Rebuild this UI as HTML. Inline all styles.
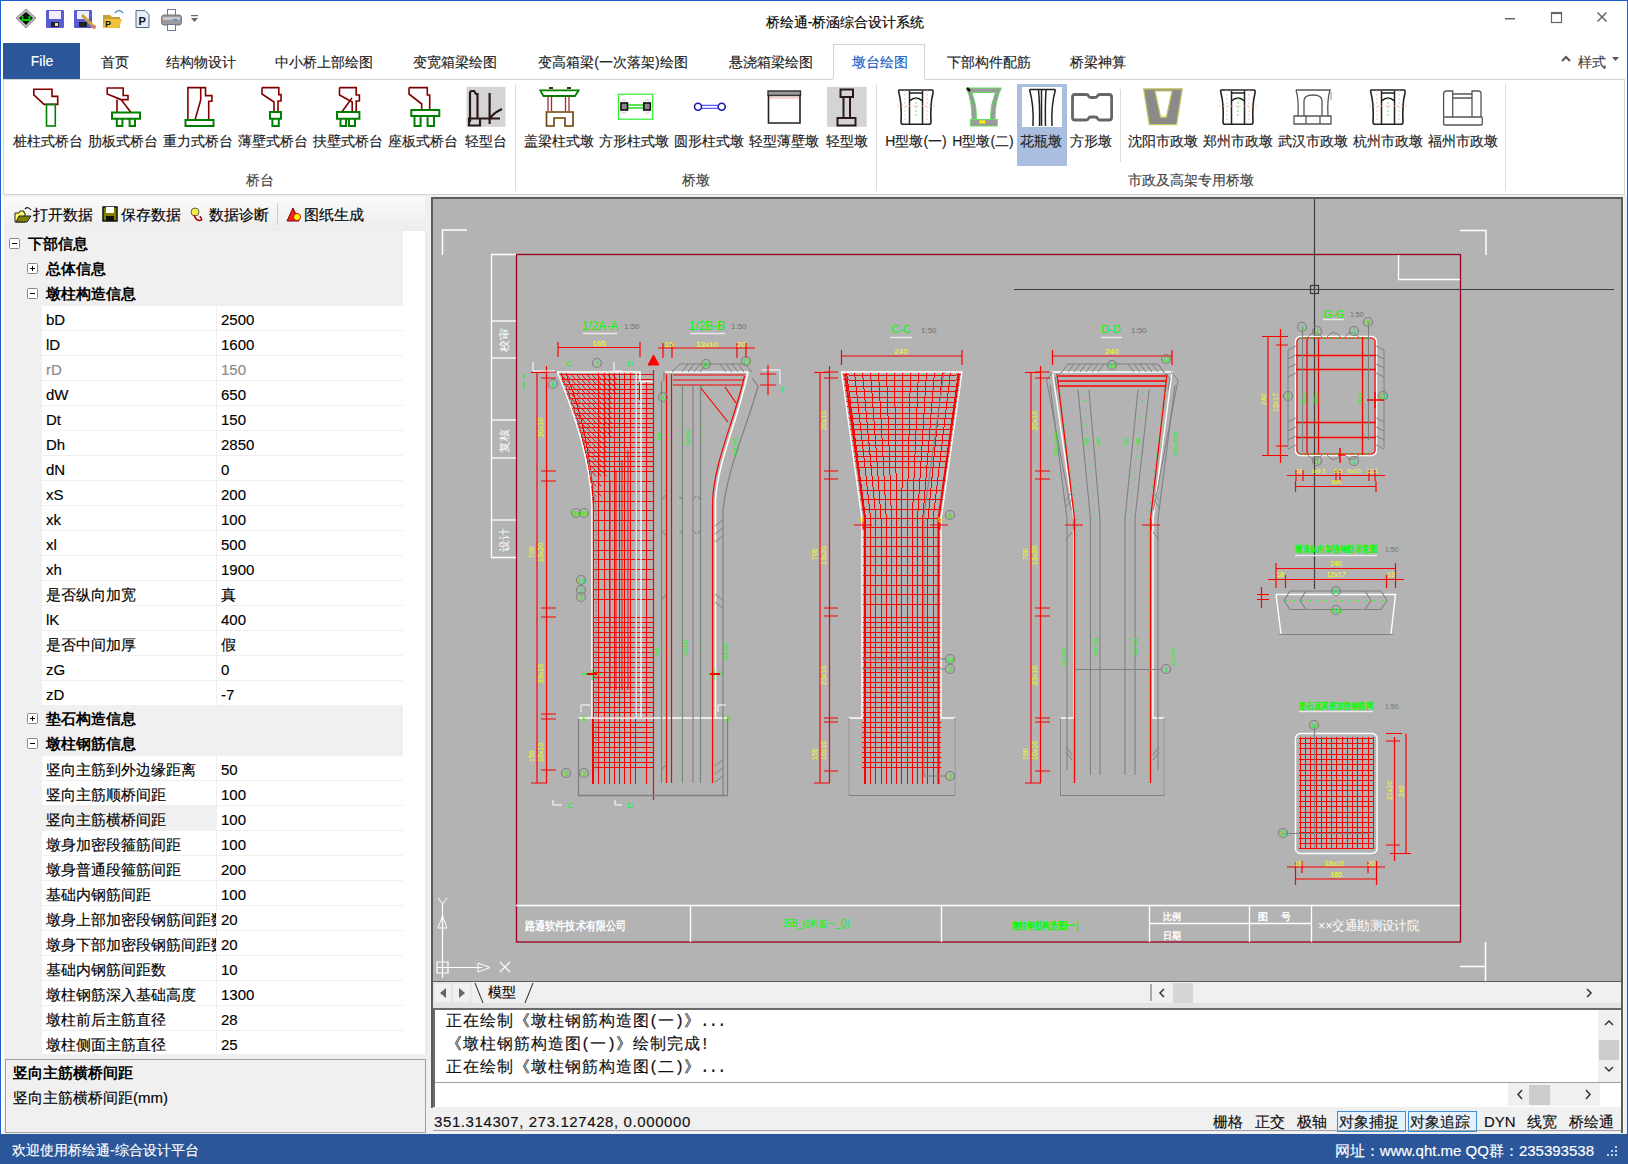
<!DOCTYPE html>
<html><head><meta charset="utf-8"><title>桥绘通</title>
<style>
html,body{margin:0;padding:0;}
body{width:1628px;height:1164px;position:relative;overflow:hidden;background:#fff;font-family:"Liberation Sans", sans-serif;}
.a{position:absolute;}
.t{white-space:nowrap;-webkit-text-stroke:0.15px;}
.t i{display:inline-block;width:1em;text-align:center;font-style:normal;}
.nocjk .t i{-webkit-text-stroke:1.2px;}
.nocjk .b i{-webkit-text-stroke:2px;}
</style></head><body>
<div class="a" style="left:0px;top:0px;width:1628px;height:1164px;background:#fff;"></div>
<div class="a t" style="left:695.0px;width:300px;text-align:center;top:12.5px;font-size:14px;line-height:19px;color:#000;font-weight:normal;"><i>桥</i><i>绘</i><i>通</i>-<i>桥</i><i>涵</i><i>综</i><i>合</i><i>设</i><i>计</i><i>系</i><i>统</i></div>
<svg class="a" style="left:1495px;top:8px" width="130" height="20"><rect x="10" y="10" width="10" height="1.5" fill="#666"/><rect x="56.5" y="4.5" width="10" height="10" fill="none" stroke="#666" stroke-width="1.2"/><rect x="56.5" y="4.5" width="10" height="1.6" fill="#666"/><path d="M102.5 4.5 L111.5 13.5 M111.5 4.5 L102.5 13.5" stroke="#666" stroke-width="1.5"/></svg>
<svg class="a" style="left:10px;top:5px" width="200" height="30"><path d="M16 4 L26 13 L16 23 L6 13 Z" fill="#bbb" stroke="#888" stroke-width="1"/><path d="M16 7 L23 13 L16 20 L9 13 Z" fill="#111"/><path d="M12.5 11 v4 h7 v-4" fill="none" stroke="#0c0" stroke-width="2"/><rect x="36" y="5" width="18" height="18" rx="1" fill="#5b5bd6"/><rect x="39" y="6" width="12" height="8" fill="#eef"/><rect x="41" y="17" width="8" height="5" fill="#222"/><rect x="45" y="18" width="3" height="3" fill="#ddd"/><rect x="64" y="5" width="18" height="18" rx="1" fill="#5b5bd6"/><rect x="67" y="6" width="12" height="8" fill="#eef"/><rect x="69" y="17" width="8" height="5" fill="#222"/><path d="M72 10 L84 22" stroke="#c9a83a" stroke-width="3"/><circle cx="84" cy="22" r="2" fill="#d77"/><path d="M93 10 h7 l2 2 h8 v11 h-17 z" fill="#c8a030"/><path d="M95 14 h17 l-3 9 h-16 z" fill="#f3c23a"/><text x="95" y="22" font-size="9" font-weight="bold" fill="#111" font-family="Liberation Sans">P</text><path d="M105 8 q4 -5 8 0" fill="none" stroke="#5a8fd0" stroke-width="1.5"/><path d="M126 5.5 h9 l4 4 v13 h-13 z" fill="#e6ecf6" stroke="#5a6a88" stroke-width="1"/><text x="128.5" y="20" font-size="11" font-weight="bold" fill="#111" font-family="Liberation Sans">P</text><rect x="157.5" y="4.5" width="8" height="6" fill="#fff" stroke="#6a7a98" stroke-width="1"/><rect x="151.5" y="10" width="20" height="10" rx="2.5" fill="#9a9a9a" stroke="#777" stroke-width="1"/><rect x="153" y="12" width="17" height="3" fill="#c8c8c8"/><rect x="163" y="14" width="4" height="1.5" fill="#4a90e0"/><rect x="157.5" y="19.5" width="8" height="6" fill="#fff" stroke="#6a7a98" stroke-width="1"/><rect x="181" y="10" width="7" height="1.2" fill="#666"/><path d="M181 13 h7 l-3.5 4 z" fill="#666"/></svg>
<div class="a" style="left:3px;top:43px;width:77px;height:36px;background:#2b579a;"></div>
<div class="a t" style="left:3.5px;width:77px;text-align:center;top:51.5px;font-size:14px;line-height:19px;color:#fff;font-weight:normal;">File</div>
<div class="a t" style="left:-5.0px;width:240px;text-align:center;top:52.5px;font-size:14px;line-height:19px;color:#222;font-weight:normal;"><i>首</i><i>页</i></div>
<div class="a t" style="left:81.0px;width:240px;text-align:center;top:52.5px;font-size:14px;line-height:19px;color:#222;font-weight:normal;"><i>结</i><i>构</i><i>物</i><i>设</i><i>计</i></div>
<div class="a t" style="left:204.0px;width:240px;text-align:center;top:52.5px;font-size:14px;line-height:19px;color:#222;font-weight:normal;"><i>中</i><i>小</i><i>桥</i><i>上</i><i>部</i><i>绘</i><i>图</i></div>
<div class="a t" style="left:335.0px;width:240px;text-align:center;top:52.5px;font-size:14px;line-height:19px;color:#222;font-weight:normal;"><i>变</i><i>宽</i><i>箱</i><i>梁</i><i>绘</i><i>图</i></div>
<div class="a t" style="left:493.0px;width:240px;text-align:center;top:52.5px;font-size:14px;line-height:19px;color:#222;font-weight:normal;"><i>变</i><i>高</i><i>箱</i><i>梁</i>(<i>一</i><i>次</i><i>落</i><i>架</i>)<i>绘</i><i>图</i></div>
<div class="a t" style="left:651.0px;width:240px;text-align:center;top:52.5px;font-size:14px;line-height:19px;color:#222;font-weight:normal;"><i>悬</i><i>浇</i><i>箱</i><i>梁</i><i>绘</i><i>图</i></div>
<div class="a t" style="left:869.0px;width:240px;text-align:center;top:52.5px;font-size:14px;line-height:19px;color:#222;font-weight:normal;"><i>下</i><i>部</i><i>构</i><i>件</i><i>配</i><i>筋</i></div>
<div class="a t" style="left:978.0px;width:240px;text-align:center;top:52.5px;font-size:14px;line-height:19px;color:#222;font-weight:normal;"><i>桥</i><i>梁</i><i>神</i><i>算</i></div>
<div class="a" style="left:833px;top:44px;width:92px;height:36px;background:#fff;border:1px solid #d2d2d2;border-bottom:none;box-sizing:border-box;"></div>
<div class="a t" style="left:834.0px;width:92px;text-align:center;top:52.5px;font-size:14px;line-height:19px;color:#1a5fc8;font-weight:normal;"><i>墩</i><i>台</i><i>绘</i><i>图</i></div>
<div class="a t " style="left:1578px;top:52.5px;font-size:14px;line-height:19px;color:#444;font-weight:normal;"><i>样</i><i>式</i></div>
<svg class="a" style="left:1558px;top:52px" width="70" height="20"><path d="M4 9 L8 5 L12 9" fill="none" stroke="#555" stroke-width="2"/><path d="M54 5 h7 l-3.5 4 z" fill="#555"/></svg>
<div class="a" style="left:3px;top:79px;width:1622px;height:116px;background:#fff;border:1px solid #d4d4d4;box-sizing:border-box;"></div>
<div class="a" style="left:833px;top:79px;width:92px;height:2px;background:#fff;"></div>
<div class="a" style="left:515px;top:84px;width:1px;height:107px;background:#dcdcdc;"></div>
<div class="a" style="left:876px;top:84px;width:1px;height:107px;background:#dcdcdc;"></div>
<div class="a" style="left:1505px;top:84px;width:1px;height:107px;background:#dcdcdc;"></div>
<div class="a" style="left:1120px;top:89px;width:1px;height:73px;background:#dcdcdc;"></div>
<div class="a" style="left:1017px;top:84px;width:50px;height:82px;background:#aabfdf;"></div>
<div class="a" style="left:1022px;top:87px;width:40px;height:40px;background:#fff;"></div>
<div class="a t" style="left:3.0px;width:90px;text-align:center;top:131.5px;font-size:14px;line-height:19px;color:#222;font-weight:normal;"><i>桩</i><i>柱</i><i>式</i><i>桥</i><i>台</i></div>
<div class="a t" style="left:78.0px;width:90px;text-align:center;top:131.5px;font-size:14px;line-height:19px;color:#222;font-weight:normal;"><i>肋</i><i>板</i><i>式</i><i>桥</i><i>台</i></div>
<div class="a t" style="left:153.0px;width:90px;text-align:center;top:131.5px;font-size:14px;line-height:19px;color:#222;font-weight:normal;"><i>重</i><i>力</i><i>式</i><i>桥</i><i>台</i></div>
<div class="a t" style="left:228.0px;width:90px;text-align:center;top:131.5px;font-size:14px;line-height:19px;color:#222;font-weight:normal;"><i>薄</i><i>壁</i><i>式</i><i>桥</i><i>台</i></div>
<div class="a t" style="left:303.0px;width:90px;text-align:center;top:131.5px;font-size:14px;line-height:19px;color:#222;font-weight:normal;"><i>扶</i><i>壁</i><i>式</i><i>桥</i><i>台</i></div>
<div class="a t" style="left:378.0px;width:90px;text-align:center;top:131.5px;font-size:14px;line-height:19px;color:#222;font-weight:normal;"><i>座</i><i>板</i><i>式</i><i>桥</i><i>台</i></div>
<div class="a t" style="left:441.0px;width:90px;text-align:center;top:131.5px;font-size:14px;line-height:19px;color:#222;font-weight:normal;"><i>轻</i><i>型</i><i>台</i></div>
<div class="a t" style="left:514.0px;width:90px;text-align:center;top:131.5px;font-size:14px;line-height:19px;color:#222;font-weight:normal;"><i>盖</i><i>梁</i><i>柱</i><i>式</i><i>墩</i></div>
<div class="a t" style="left:589.0px;width:90px;text-align:center;top:131.5px;font-size:14px;line-height:19px;color:#222;font-weight:normal;"><i>方</i><i>形</i><i>柱</i><i>式</i><i>墩</i></div>
<div class="a t" style="left:664.0px;width:90px;text-align:center;top:131.5px;font-size:14px;line-height:19px;color:#222;font-weight:normal;"><i>圆</i><i>形</i><i>柱</i><i>式</i><i>墩</i></div>
<div class="a t" style="left:739.0px;width:90px;text-align:center;top:131.5px;font-size:14px;line-height:19px;color:#222;font-weight:normal;"><i>轻</i><i>型</i><i>薄</i><i>壁</i><i>墩</i></div>
<div class="a t" style="left:802.0px;width:90px;text-align:center;top:131.5px;font-size:14px;line-height:19px;color:#222;font-weight:normal;"><i>轻</i><i>型</i><i>墩</i></div>
<div class="a t" style="left:871.0px;width:90px;text-align:center;top:131.5px;font-size:14px;line-height:19px;color:#222;font-weight:normal;">H<i>型</i><i>墩</i>(<i>一</i>)</div>
<div class="a t" style="left:938.0px;width:90px;text-align:center;top:131.5px;font-size:14px;line-height:19px;color:#222;font-weight:normal;">H<i>型</i><i>墩</i>(<i>二</i>)</div>
<div class="a t" style="left:996.0px;width:90px;text-align:center;top:131.5px;font-size:14px;line-height:19px;color:#222;font-weight:normal;"><i>花</i><i>瓶</i><i>墩</i></div>
<div class="a t" style="left:1046.0px;width:90px;text-align:center;top:131.5px;font-size:14px;line-height:19px;color:#222;font-weight:normal;"><i>方</i><i>形</i><i>墩</i></div>
<div class="a t" style="left:1118.0px;width:90px;text-align:center;top:131.5px;font-size:14px;line-height:19px;color:#222;font-weight:normal;"><i>沈</i><i>阳</i><i>市</i><i>政</i><i>墩</i></div>
<div class="a t" style="left:1193.0px;width:90px;text-align:center;top:131.5px;font-size:14px;line-height:19px;color:#222;font-weight:normal;"><i>郑</i><i>州</i><i>市</i><i>政</i><i>墩</i></div>
<div class="a t" style="left:1268.0px;width:90px;text-align:center;top:131.5px;font-size:14px;line-height:19px;color:#222;font-weight:normal;"><i>武</i><i>汉</i><i>市</i><i>政</i><i>墩</i></div>
<div class="a t" style="left:1343.0px;width:90px;text-align:center;top:131.5px;font-size:14px;line-height:19px;color:#222;font-weight:normal;"><i>杭</i><i>州</i><i>市</i><i>政</i><i>墩</i></div>
<div class="a t" style="left:1418.0px;width:90px;text-align:center;top:131.5px;font-size:14px;line-height:19px;color:#222;font-weight:normal;"><i>福</i><i>州</i><i>市</i><i>政</i><i>墩</i></div>
<div class="a t" style="left:220.0px;width:80px;text-align:center;top:170.5px;font-size:14px;line-height:19px;color:#444;font-weight:normal;"><i>桥</i><i>台</i></div>
<div class="a t" style="left:656.0px;width:80px;text-align:center;top:170.5px;font-size:14px;line-height:19px;color:#444;font-weight:normal;"><i>桥</i><i>墩</i></div>
<div class="a t" style="left:1091.0px;width:200px;text-align:center;top:170.5px;font-size:14px;line-height:19px;color:#444;font-weight:normal;"><i>市</i><i>政</i><i>及</i><i>高</i><i>架</i><i>专</i><i>用</i><i>桥</i><i>墩</i></div>
<svg class="a" style="left:0px;top:80px" width="1628" height="50" viewBox="0 80 1628 50">
<path d="M33.8 89.2 H52 V96.4 H57.7 V104.4 H44.1 L33.8 94.8 Z" stroke="#800000" stroke-width="1.6" fill="none" stroke-linejoin="miter"/>
<rect x="46.5" y="104.4" width="8.8" height="21.6" stroke="#008000" stroke-width="1.6" fill="none" stroke-linejoin="miter"/>
<path d="M107.2 88 H123.2 V95.5 H128 V99.6 H121 L107.2 94 Z M117 99.6 V112.4 M121 99.6 L131 112.4" stroke="#800000" stroke-width="1.6" fill="none" stroke-linejoin="miter"/>
<path d="M112 112.4 H140 V118.7 H112 Z M116.8 118.7 V126 H122.4 V118.7 M129.6 118.7 V126 H135 V118.7" stroke="#008000" stroke-width="2" fill="none"/>
<path d="M187.9 120 V87.6 H205.5 V95.6 H211.9 V101.2 H208.7 V120 M200.7 87.6 V100 L195 120" stroke="#800000" stroke-width="1.6" fill="none" stroke-linejoin="miter"/>
<rect x="185.5" y="120" width="28" height="6" stroke="#008000" stroke-width="2" fill="none"/>
<path d="M262 87.6 H278.8 V94.6 H281 V101 H278 V112 M262 87.6 V94 L274 102 V112" stroke="#800000" stroke-width="1.6" fill="none" stroke-linejoin="miter"/>
<path d="M270 112 H281 V118.7 H270 Z M272.4 118.7 V126 H278.8 V118.7" stroke="#008000" stroke-width="2" fill="none"/>
<path d="M339.5 87.6 H356.2 V95 H359.4 V101 H356.2 V112 M339.5 87.6 V95 L352.2 102 V112 M341.8 112 L352 98" stroke="#800000" stroke-width="1.6" fill="none" stroke-linejoin="miter"/>
<path d="M337 112 H359.4 V118.7 H337 Z M340.5 118.7 V126 H346 V118.7 M349 118.7 V126 H355 V118.7" stroke="#008000" stroke-width="2" fill="none"/>
<path d="M409 87.6 H427.3 V95 H429.7 V110 M409 87.6 V94 L421.7 104 V110" stroke="#800000" stroke-width="1.6" fill="none" stroke-linejoin="miter"/>
<path d="M411.3 110 H439.3 V116 H411.3 Z M414.5 116 V126 H420.6 V116 M427.6 116 V126 H434 V116" stroke="#008000" stroke-width="2" fill="none"/>
<rect x="466.5" y="86.8" width="39" height="40" fill="#d4d4d4"/>
<path d="M470 122 V93 Q470 91 472 91 H474 L476 94 H477.5 V118 M469 118.5 H480 V125.5 H469 Z M489.6 93 V124 M477 118.5 H500 M490 118 Q495 112 502 109" stroke="#2a1818" stroke-width="2.2" fill="none"/>
<path d="M540.3 90.4 H578.6 L575 96 H543.5 Z" stroke="#008000" stroke-width="1.8" fill="#fff"/>
<path d="M549 88 h4 M567 88 h4" stroke="#4a3000" stroke-width="2"/>
<path d="M548 96 V111 M551.5 96 V111 M565.5 96 V111 M569 96 V111" stroke="#a0302a" stroke-width="1.3"/>
<path d="M546.5 112 H573 V126 H565 V118 H554 V126 H546.5 Z" stroke="#6b4000" stroke-width="1.6" fill="none"/>
<rect x="618.4" y="94.2" width="34.3" height="25" stroke="#33ee33" stroke-width="1.2" fill="none"/>
<ellipse cx="624" cy="106.5" rx="3" ry="7" stroke="#ccc" stroke-width="1" fill="none"/><ellipse cx="647" cy="106.5" rx="3" ry="7" stroke="#ccc" stroke-width="1" fill="none"/>
<path d="M627 105 H644 M627 108 H644" stroke="#22dd22" stroke-width="1.5"/>
<rect x="621" y="103" width="6.5" height="7" stroke="#111" stroke-width="1.6" fill="#888"/><rect x="643.8" y="103" width="6.5" height="7" stroke="#111" stroke-width="1.6" fill="#888"/>
<path d="M701 105.3 H718.5 M701 108.3 H718.5" stroke="#3333ff" stroke-width="1"/>
<circle cx="698" cy="106.8" r="3.5" stroke="#1a1aa8" stroke-width="1.6" fill="#fff"/><circle cx="721.7" cy="106.8" r="3.5" stroke="#1a1aa8" stroke-width="1.6" fill="#fff"/>
<path d="M768 91 H800.5 V95.5 H768 Z" stroke="#333" stroke-width="1.4" fill="#999"/>
<path d="M768.5 95 V123 H800 V95" stroke="#222" stroke-width="1.6" fill="none"/>
<path d="M769 98 H799" stroke="#f66" stroke-width="0.6"/>
<rect x="827" y="86.9" width="39.7" height="40" fill="#d4d4d4"/>
<path d="M840.5 89.5 H853 V97 H840.5 Z M843.5 97 V118 M850 97 V118 M837.5 118 H855.5 V125.5 H837.5 Z" stroke="#2a1818" stroke-width="2" fill="none"/>
<path d="M899.5 90 H932 Q933.5 90 933 93 Q930 105 931 122 Q931 124.3 929 124.3 H903 Q901 124.3 901 122 Q902 105 899 93 Q898 90 899.5 90 Z" stroke="#222" stroke-width="1.6" fill="none"/>
<path d="M909.5 91 V124 M922.5 91 V124 M909.5 93 H922.5 M909.5 101 Q916 95 922.5 101" stroke="#222" stroke-width="1.5" fill="none"/>
<path d="M897 106 H935 M905 90 V124 M927 90 V124" stroke="#ffb0a0" stroke-width="0.8" stroke-dasharray="2 2"/>
<path d="M916 98 V118" stroke="#66dd66" stroke-width="1" stroke-dasharray="2 2"/>
<path d="M966.3 88 H1001.4 Q995 100 995 119.5 H972 Q972 100 966.3 88 Z" fill="#9a9a9a" stroke="#66dd66" stroke-width="1"/>
<path d="M972 92.5 H995.5 Q990 105 990.5 119.5 H976.5 Q977 105 972 92.5 Z" fill="#fff" stroke="#66dd66" stroke-width="1"/>
<rect x="970.3" y="119.5" width="27" height="6.5" fill="#9a9a9a" stroke="#66dd66" stroke-width="1"/>
<rect x="979.4" y="120.3" width="6" height="3.2" fill="#ffee00"/>
<path d="M967 88 l3 3" stroke="#111" stroke-width="2.5"/>
<path d="M1029.5 89.5 H1055.5 M1029.5 89.5 Q1034 105 1033 126 M1055.5 89.5 Q1051 105 1052 126 M1038.5 90 Q1040 105 1039.5 126 M1041.5 90 V126 M1046 90 Q1045 105 1045.5 126" stroke="#222" stroke-width="1.5" fill="none"/>
<path d="M1075 94.5 H1086 Q1088 94.5 1088.5 96 Q1089 97.5 1091 97.5 H1095 Q1097 97.5 1097.5 96 Q1098 94.5 1100 94.5 H1109 Q1111.6 94.5 1111.6 97 V117.5 Q1111.6 120 1109 120 H1100 Q1098 120 1097.5 118.5 Q1097 117 1095 117 H1091 Q1089 117 1088.5 118.5 Q1088 120 1086 120 H1075 Q1072.5 120 1072.5 117.5 V97 Q1072.5 94.5 1075 94.5 Z" stroke="#666" stroke-width="2.8" fill="none"/>
<path d="M1143.6 88.8 H1182.3 L1176.6 124.7 H1149.3 Z M1155 91 H1172 L1166.4 117.2 H1160.7 Z" fill="#8a8a8a" fill-rule="evenodd" stroke="#c8c860" stroke-width="1.2"/>
<path d="M1221.5 90 H1254 Q1255.5 90 1255 93 Q1252 105 1253 122 Q1253 124.3 1251 124.3 H1225 Q1223 124.3 1223 122 Q1224 105 1221 93 Q1220 90 1221.5 90 Z" stroke="#222" stroke-width="1.6" fill="none"/>
<path d="M1231.5 91 V124 M1244.5 91 V124 M1231.5 93 H1244.5 M1231.5 101 Q1238 95 1244.5 101" stroke="#222" stroke-width="1.5" fill="none"/>
<path d="M1219 106 H1257 M1227 90 V124 M1249 90 V124" stroke="#ffb0a0" stroke-width="0.8" stroke-dasharray="2 2"/>
<path d="M1238 98 V118" stroke="#66dd66" stroke-width="1" stroke-dasharray="2 2"/>
<path d="M1371.5 90 H1404 Q1405.5 90 1405 93 Q1402 105 1403 122 Q1403 124.3 1401 124.3 H1375 Q1373 124.3 1373 122 Q1374 105 1371 93 Q1370 90 1371.5 90 Z" stroke="#222" stroke-width="1.6" fill="none"/>
<path d="M1381.5 91 V124 M1394.5 91 V124 M1381.5 93 H1394.5 M1381.5 101 Q1388 95 1394.5 101" stroke="#222" stroke-width="1.5" fill="none"/>
<path d="M1369 106 H1407 M1377 90 V124 M1399 90 V124" stroke="#ffb0a0" stroke-width="0.8" stroke-dasharray="2 2"/>
<path d="M1388 98 V118" stroke="#66dd66" stroke-width="1" stroke-dasharray="2 2"/>
<path d="M1296 90 H1330 Q1327 100 1328 116 M1296 90 Q1299 100 1298 116 M1304 116 V101 Q1304 95 1313 95 Q1322 95 1322 101 V116" stroke="#555" stroke-width="1.3" fill="none"/>
<path d="M1294 116 H1331 V124 H1294 Z M1306 116 V124 M1320 116 V124" stroke="#555" stroke-width="1.3" fill="none"/>
<path d="M1331 92 V100" stroke="#999" stroke-width="1"/>
<path d="M1443.6 117 V93 Q1444 91 1447 91 H1452.7 V117 M1481 117 V93 Q1481 91 1478 91 H1472 V117 M1452.7 94 H1472 M1452.7 98 H1472" stroke="#555" stroke-width="1.3" fill="none"/>
<rect x="1443.6" y="117" width="38.7" height="8" rx="1" stroke="#555" stroke-width="1.3" fill="none"/>
</svg>
<div class="a" style="left:4px;top:195px;width:423px;height:939px;background:#f0f0f0;"></div>
<div class="a" style="left:5px;top:197px;width:420px;height:34px;background:linear-gradient(#fbfbfb,#ececec);"></div>
<div class="a t " style="left:33px;top:203.5px;font-size:15px;line-height:21px;color:#000;font-weight:normal;"><i>打</i><i>开</i><i>数</i><i>据</i></div>
<div class="a t " style="left:121px;top:203.5px;font-size:15px;line-height:21px;color:#000;font-weight:normal;"><i>保</i><i>存</i><i>数</i><i>据</i></div>
<div class="a t " style="left:209px;top:203.5px;font-size:15px;line-height:21px;color:#000;font-weight:normal;"><i>数</i><i>据</i><i>诊</i><i>断</i></div>
<div class="a" style="left:277px;top:203px;width:1px;height:22px;background:#ccc;"></div>
<div class="a t " style="left:304px;top:203.5px;font-size:15px;line-height:21px;color:#000;font-weight:normal;"><i>图</i><i>纸</i><i>生</i><i>成</i></div>
<svg class="a" style="left:10px;top:203px" width="300" height="22"><path d="M5 10 h4 l1 -2 h4 v2 h1 v9 h-10 z" fill="#ffff66" stroke="#222" stroke-width="1"/><path d="M6 19 l3 -6 h12 l-4 6 z" fill="#808000" stroke="#222" stroke-width="1"/><path d="M15 6 q3 -3 6 1" fill="none" stroke="#111" stroke-width="1.2"/><rect x="93" y="4" width="14" height="14" fill="#808000" stroke="#111" stroke-width="1.5"/><rect x="96" y="4" width="8" height="6" fill="#fff"/><rect x="96" y="13" width="8" height="5" fill="#111"/><circle cx="185" cy="9" r="4" fill="#ee4" stroke="#665" stroke-width="1"/><path d="M184 12 q2 7 8 5 M190 13 l2 4" fill="none" stroke="#a00" stroke-width="1.5"/><path d="M277 18 l6 -13 l6 13 z" fill="#e22" stroke="#800" stroke-width="1"/><circle cx="287" cy="14" r="3.5" fill="#ff0" stroke="#c00" stroke-width="1"/></svg>
<div class="a" style="left:5px;top:231px;width:420px;height:823px;background:#fff;"></div>
<div class="a" style="left:5px;top:231px;width:37px;height:823px;background:#f0f0f0;"></div>
<div class="a" style="left:6px;top:231px;width:397px;height:25px;background:#f0f0f0;"></div>
<svg class="a" style="left:9px;top:238px" width="12" height="12"><rect x="0.5" y="0.5" width="10" height="10" rx="1" fill="#fff" stroke="#888"/><path d="M3 5.5 h5" stroke="#000" stroke-width="1"/></svg>
<div class="a t b" style="left:28px;top:233.0px;font-size:15px;line-height:21px;color:#000;font-weight:bold;-webkit-text-stroke:0;"><i>下</i><i>部</i><i>信</i><i>息</i></div>
<div class="a" style="left:6px;top:256px;width:397px;height:25px;background:#f0f0f0;"></div>
<svg class="a" style="left:27px;top:263px" width="12" height="12"><rect x="0.5" y="0.5" width="10" height="10" rx="1" fill="#fff" stroke="#888"/><path d="M3 5.5 h5" stroke="#000" stroke-width="1"/><path d="M5.5 3 v5" stroke="#000" stroke-width="1"/></svg>
<div class="a t b" style="left:46px;top:258.0px;font-size:15px;line-height:21px;color:#000;font-weight:bold;-webkit-text-stroke:0;"><i>总</i><i>体</i><i>信</i><i>息</i></div>
<div class="a" style="left:6px;top:281px;width:397px;height:25px;background:#f0f0f0;"></div>
<svg class="a" style="left:27px;top:288px" width="12" height="12"><rect x="0.5" y="0.5" width="10" height="10" rx="1" fill="#fff" stroke="#888"/><path d="M3 5.5 h5" stroke="#000" stroke-width="1"/></svg>
<div class="a t b" style="left:46px;top:283.0px;font-size:15px;line-height:21px;color:#000;font-weight:bold;-webkit-text-stroke:0;"><i>墩</i><i>柱</i><i>构</i><i>造</i><i>信</i><i>息</i></div>
<div class="a" style="left:42px;top:330px;width:361px;height:1px;background:#f0f0f0;"></div>
<div class="a" style="left:216px;top:306px;width:1px;height:25px;background:#f0f0f0;"></div>
<div class="a t " style="left:46px;top:309.0px;font-size:15px;line-height:21px;color:#000;font-weight:normal;width:170px;overflow:hidden;white-space:nowrap;">bD</div>
<div class="a t " style="left:221px;top:309.0px;font-size:15px;line-height:21px;color:#000;font-weight:normal;">2500</div>
<div class="a" style="left:42px;top:355px;width:361px;height:1px;background:#f0f0f0;"></div>
<div class="a" style="left:216px;top:331px;width:1px;height:25px;background:#f0f0f0;"></div>
<div class="a t " style="left:46px;top:334.0px;font-size:15px;line-height:21px;color:#000;font-weight:normal;width:170px;overflow:hidden;white-space:nowrap;">lD</div>
<div class="a t " style="left:221px;top:334.0px;font-size:15px;line-height:21px;color:#000;font-weight:normal;">1600</div>
<div class="a" style="left:42px;top:380px;width:361px;height:1px;background:#f0f0f0;"></div>
<div class="a" style="left:216px;top:356px;width:1px;height:25px;background:#f0f0f0;"></div>
<div class="a t " style="left:46px;top:359.0px;font-size:15px;line-height:21px;color:#8a8a8a;font-weight:normal;width:170px;overflow:hidden;white-space:nowrap;">rD</div>
<div class="a t " style="left:221px;top:359.0px;font-size:15px;line-height:21px;color:#8a8a8a;font-weight:normal;">150</div>
<div class="a" style="left:42px;top:405px;width:361px;height:1px;background:#f0f0f0;"></div>
<div class="a" style="left:216px;top:381px;width:1px;height:25px;background:#f0f0f0;"></div>
<div class="a t " style="left:46px;top:384.0px;font-size:15px;line-height:21px;color:#000;font-weight:normal;width:170px;overflow:hidden;white-space:nowrap;">dW</div>
<div class="a t " style="left:221px;top:384.0px;font-size:15px;line-height:21px;color:#000;font-weight:normal;">650</div>
<div class="a" style="left:42px;top:430px;width:361px;height:1px;background:#f0f0f0;"></div>
<div class="a" style="left:216px;top:406px;width:1px;height:25px;background:#f0f0f0;"></div>
<div class="a t " style="left:46px;top:409.0px;font-size:15px;line-height:21px;color:#000;font-weight:normal;width:170px;overflow:hidden;white-space:nowrap;">Dt</div>
<div class="a t " style="left:221px;top:409.0px;font-size:15px;line-height:21px;color:#000;font-weight:normal;">150</div>
<div class="a" style="left:42px;top:455px;width:361px;height:1px;background:#f0f0f0;"></div>
<div class="a" style="left:216px;top:431px;width:1px;height:25px;background:#f0f0f0;"></div>
<div class="a t " style="left:46px;top:434.0px;font-size:15px;line-height:21px;color:#000;font-weight:normal;width:170px;overflow:hidden;white-space:nowrap;">Dh</div>
<div class="a t " style="left:221px;top:434.0px;font-size:15px;line-height:21px;color:#000;font-weight:normal;">2850</div>
<div class="a" style="left:42px;top:480px;width:361px;height:1px;background:#f0f0f0;"></div>
<div class="a" style="left:216px;top:456px;width:1px;height:25px;background:#f0f0f0;"></div>
<div class="a t " style="left:46px;top:459.0px;font-size:15px;line-height:21px;color:#000;font-weight:normal;width:170px;overflow:hidden;white-space:nowrap;">dN</div>
<div class="a t " style="left:221px;top:459.0px;font-size:15px;line-height:21px;color:#000;font-weight:normal;">0</div>
<div class="a" style="left:42px;top:505px;width:361px;height:1px;background:#f0f0f0;"></div>
<div class="a" style="left:216px;top:481px;width:1px;height:25px;background:#f0f0f0;"></div>
<div class="a t " style="left:46px;top:484.0px;font-size:15px;line-height:21px;color:#000;font-weight:normal;width:170px;overflow:hidden;white-space:nowrap;">xS</div>
<div class="a t " style="left:221px;top:484.0px;font-size:15px;line-height:21px;color:#000;font-weight:normal;">200</div>
<div class="a" style="left:42px;top:530px;width:361px;height:1px;background:#f0f0f0;"></div>
<div class="a" style="left:216px;top:506px;width:1px;height:25px;background:#f0f0f0;"></div>
<div class="a t " style="left:46px;top:509.0px;font-size:15px;line-height:21px;color:#000;font-weight:normal;width:170px;overflow:hidden;white-space:nowrap;">xk</div>
<div class="a t " style="left:221px;top:509.0px;font-size:15px;line-height:21px;color:#000;font-weight:normal;">100</div>
<div class="a" style="left:42px;top:555px;width:361px;height:1px;background:#f0f0f0;"></div>
<div class="a" style="left:216px;top:531px;width:1px;height:25px;background:#f0f0f0;"></div>
<div class="a t " style="left:46px;top:534.0px;font-size:15px;line-height:21px;color:#000;font-weight:normal;width:170px;overflow:hidden;white-space:nowrap;">xl</div>
<div class="a t " style="left:221px;top:534.0px;font-size:15px;line-height:21px;color:#000;font-weight:normal;">500</div>
<div class="a" style="left:42px;top:580px;width:361px;height:1px;background:#f0f0f0;"></div>
<div class="a" style="left:216px;top:556px;width:1px;height:25px;background:#f0f0f0;"></div>
<div class="a t " style="left:46px;top:559.0px;font-size:15px;line-height:21px;color:#000;font-weight:normal;width:170px;overflow:hidden;white-space:nowrap;">xh</div>
<div class="a t " style="left:221px;top:559.0px;font-size:15px;line-height:21px;color:#000;font-weight:normal;">1900</div>
<div class="a" style="left:42px;top:605px;width:361px;height:1px;background:#f0f0f0;"></div>
<div class="a" style="left:216px;top:581px;width:1px;height:25px;background:#f0f0f0;"></div>
<div class="a t " style="left:46px;top:584.0px;font-size:15px;line-height:21px;color:#000;font-weight:normal;width:170px;overflow:hidden;white-space:nowrap;"><i>是</i><i>否</i><i>纵</i><i>向</i><i>加</i><i>宽</i></div>
<div class="a t " style="left:221px;top:584.0px;font-size:15px;line-height:21px;color:#000;font-weight:normal;"><i>真</i></div>
<div class="a" style="left:42px;top:630px;width:361px;height:1px;background:#f0f0f0;"></div>
<div class="a" style="left:216px;top:606px;width:1px;height:25px;background:#f0f0f0;"></div>
<div class="a t " style="left:46px;top:609.0px;font-size:15px;line-height:21px;color:#000;font-weight:normal;width:170px;overflow:hidden;white-space:nowrap;">lK</div>
<div class="a t " style="left:221px;top:609.0px;font-size:15px;line-height:21px;color:#000;font-weight:normal;">400</div>
<div class="a" style="left:42px;top:655px;width:361px;height:1px;background:#f0f0f0;"></div>
<div class="a" style="left:216px;top:631px;width:1px;height:25px;background:#f0f0f0;"></div>
<div class="a t " style="left:46px;top:634.0px;font-size:15px;line-height:21px;color:#000;font-weight:normal;width:170px;overflow:hidden;white-space:nowrap;"><i>是</i><i>否</i><i>中</i><i>间</i><i>加</i><i>厚</i></div>
<div class="a t " style="left:221px;top:634.0px;font-size:15px;line-height:21px;color:#000;font-weight:normal;"><i>假</i></div>
<div class="a" style="left:42px;top:680px;width:361px;height:1px;background:#f0f0f0;"></div>
<div class="a" style="left:216px;top:656px;width:1px;height:25px;background:#f0f0f0;"></div>
<div class="a t " style="left:46px;top:659.0px;font-size:15px;line-height:21px;color:#000;font-weight:normal;width:170px;overflow:hidden;white-space:nowrap;">zG</div>
<div class="a t " style="left:221px;top:659.0px;font-size:15px;line-height:21px;color:#000;font-weight:normal;">0</div>
<div class="a" style="left:42px;top:705px;width:361px;height:1px;background:#f0f0f0;"></div>
<div class="a" style="left:216px;top:681px;width:1px;height:25px;background:#f0f0f0;"></div>
<div class="a t " style="left:46px;top:684.0px;font-size:15px;line-height:21px;color:#000;font-weight:normal;width:170px;overflow:hidden;white-space:nowrap;">zD</div>
<div class="a t " style="left:221px;top:684.0px;font-size:15px;line-height:21px;color:#000;font-weight:normal;">-7</div>
<div class="a" style="left:6px;top:706px;width:397px;height:25px;background:#f0f0f0;"></div>
<svg class="a" style="left:27px;top:713px" width="12" height="12"><rect x="0.5" y="0.5" width="10" height="10" rx="1" fill="#fff" stroke="#888"/><path d="M3 5.5 h5" stroke="#000" stroke-width="1"/><path d="M5.5 3 v5" stroke="#000" stroke-width="1"/></svg>
<div class="a t b" style="left:46px;top:708.0px;font-size:15px;line-height:21px;color:#000;font-weight:bold;-webkit-text-stroke:0;"><i>垫</i><i>石</i><i>构</i><i>造</i><i>信</i><i>息</i></div>
<div class="a" style="left:6px;top:731px;width:397px;height:25px;background:#f0f0f0;"></div>
<svg class="a" style="left:27px;top:738px" width="12" height="12"><rect x="0.5" y="0.5" width="10" height="10" rx="1" fill="#fff" stroke="#888"/><path d="M3 5.5 h5" stroke="#000" stroke-width="1"/></svg>
<div class="a t b" style="left:46px;top:733.0px;font-size:15px;line-height:21px;color:#000;font-weight:bold;-webkit-text-stroke:0;"><i>墩</i><i>柱</i><i>钢</i><i>筋</i><i>信</i><i>息</i></div>
<div class="a" style="left:42px;top:780px;width:361px;height:1px;background:#f0f0f0;"></div>
<div class="a" style="left:216px;top:756px;width:1px;height:25px;background:#f0f0f0;"></div>
<div class="a t " style="left:46px;top:759.0px;font-size:15px;line-height:21px;color:#000;font-weight:normal;width:170px;overflow:hidden;white-space:nowrap;"><i>竖</i><i>向</i><i>主</i><i>筋</i><i>到</i><i>外</i><i>边</i><i>缘</i><i>距</i><i>离</i></div>
<div class="a t " style="left:221px;top:759.0px;font-size:15px;line-height:21px;color:#000;font-weight:normal;">50</div>
<div class="a" style="left:42px;top:805px;width:361px;height:1px;background:#f0f0f0;"></div>
<div class="a" style="left:216px;top:781px;width:1px;height:25px;background:#f0f0f0;"></div>
<div class="a t " style="left:46px;top:784.0px;font-size:15px;line-height:21px;color:#000;font-weight:normal;width:170px;overflow:hidden;white-space:nowrap;"><i>竖</i><i>向</i><i>主</i><i>筋</i><i>顺</i><i>桥</i><i>间</i><i>距</i></div>
<div class="a t " style="left:221px;top:784.0px;font-size:15px;line-height:21px;color:#000;font-weight:normal;">100</div>
<div class="a" style="left:42px;top:830px;width:361px;height:1px;background:#f0f0f0;"></div>
<div class="a" style="left:216px;top:806px;width:1px;height:25px;background:#f0f0f0;"></div>
<div class="a" style="left:42px;top:806px;width:174px;height:24px;background:#f0f0f0;"></div>
<div class="a t " style="left:46px;top:809.0px;font-size:15px;line-height:21px;color:#000;font-weight:normal;width:170px;overflow:hidden;white-space:nowrap;"><i>竖</i><i>向</i><i>主</i><i>筋</i><i>横</i><i>桥</i><i>间</i><i>距</i></div>
<div class="a t " style="left:221px;top:809.0px;font-size:15px;line-height:21px;color:#000;font-weight:normal;">100</div>
<div class="a" style="left:42px;top:855px;width:361px;height:1px;background:#f0f0f0;"></div>
<div class="a" style="left:216px;top:831px;width:1px;height:25px;background:#f0f0f0;"></div>
<div class="a t " style="left:46px;top:834.0px;font-size:15px;line-height:21px;color:#000;font-weight:normal;width:170px;overflow:hidden;white-space:nowrap;"><i>墩</i><i>身</i><i>加</i><i>密</i><i>段</i><i>箍</i><i>筋</i><i>间</i><i>距</i></div>
<div class="a t " style="left:221px;top:834.0px;font-size:15px;line-height:21px;color:#000;font-weight:normal;">100</div>
<div class="a" style="left:42px;top:880px;width:361px;height:1px;background:#f0f0f0;"></div>
<div class="a" style="left:216px;top:856px;width:1px;height:25px;background:#f0f0f0;"></div>
<div class="a t " style="left:46px;top:859.0px;font-size:15px;line-height:21px;color:#000;font-weight:normal;width:170px;overflow:hidden;white-space:nowrap;"><i>墩</i><i>身</i><i>普</i><i>通</i><i>段</i><i>箍</i><i>筋</i><i>间</i><i>距</i></div>
<div class="a t " style="left:221px;top:859.0px;font-size:15px;line-height:21px;color:#000;font-weight:normal;">200</div>
<div class="a" style="left:42px;top:905px;width:361px;height:1px;background:#f0f0f0;"></div>
<div class="a" style="left:216px;top:881px;width:1px;height:25px;background:#f0f0f0;"></div>
<div class="a t " style="left:46px;top:884.0px;font-size:15px;line-height:21px;color:#000;font-weight:normal;width:170px;overflow:hidden;white-space:nowrap;"><i>基</i><i>础</i><i>内</i><i>钢</i><i>筋</i><i>间</i><i>距</i></div>
<div class="a t " style="left:221px;top:884.0px;font-size:15px;line-height:21px;color:#000;font-weight:normal;">100</div>
<div class="a" style="left:42px;top:930px;width:361px;height:1px;background:#f0f0f0;"></div>
<div class="a" style="left:216px;top:906px;width:1px;height:25px;background:#f0f0f0;"></div>
<div class="a t " style="left:46px;top:909.0px;font-size:15px;line-height:21px;color:#000;font-weight:normal;width:170px;overflow:hidden;white-space:nowrap;"><i>墩</i><i>身</i><i>上</i><i>部</i><i>加</i><i>密</i><i>段</i><i>钢</i><i>筋</i><i>间</i><i>距</i><i>数</i></div>
<div class="a t " style="left:221px;top:909.0px;font-size:15px;line-height:21px;color:#000;font-weight:normal;">20</div>
<div class="a" style="left:42px;top:955px;width:361px;height:1px;background:#f0f0f0;"></div>
<div class="a" style="left:216px;top:931px;width:1px;height:25px;background:#f0f0f0;"></div>
<div class="a t " style="left:46px;top:934.0px;font-size:15px;line-height:21px;color:#000;font-weight:normal;width:170px;overflow:hidden;white-space:nowrap;"><i>墩</i><i>身</i><i>下</i><i>部</i><i>加</i><i>密</i><i>段</i><i>钢</i><i>筋</i><i>间</i><i>距</i><i>数</i></div>
<div class="a t " style="left:221px;top:934.0px;font-size:15px;line-height:21px;color:#000;font-weight:normal;">20</div>
<div class="a" style="left:42px;top:980px;width:361px;height:1px;background:#f0f0f0;"></div>
<div class="a" style="left:216px;top:956px;width:1px;height:25px;background:#f0f0f0;"></div>
<div class="a t " style="left:46px;top:959.0px;font-size:15px;line-height:21px;color:#000;font-weight:normal;width:170px;overflow:hidden;white-space:nowrap;"><i>基</i><i>础</i><i>内</i><i>钢</i><i>筋</i><i>间</i><i>距</i><i>数</i></div>
<div class="a t " style="left:221px;top:959.0px;font-size:15px;line-height:21px;color:#000;font-weight:normal;">10</div>
<div class="a" style="left:42px;top:1005px;width:361px;height:1px;background:#f0f0f0;"></div>
<div class="a" style="left:216px;top:981px;width:1px;height:25px;background:#f0f0f0;"></div>
<div class="a t " style="left:46px;top:984.0px;font-size:15px;line-height:21px;color:#000;font-weight:normal;width:170px;overflow:hidden;white-space:nowrap;"><i>墩</i><i>柱</i><i>钢</i><i>筋</i><i>深</i><i>入</i><i>基</i><i>础</i><i>高</i><i>度</i></div>
<div class="a t " style="left:221px;top:984.0px;font-size:15px;line-height:21px;color:#000;font-weight:normal;">1300</div>
<div class="a" style="left:42px;top:1030px;width:361px;height:1px;background:#f0f0f0;"></div>
<div class="a" style="left:216px;top:1006px;width:1px;height:25px;background:#f0f0f0;"></div>
<div class="a t " style="left:46px;top:1009.0px;font-size:15px;line-height:21px;color:#000;font-weight:normal;width:170px;overflow:hidden;white-space:nowrap;"><i>墩</i><i>柱</i><i>前</i><i>后</i><i>主</i><i>筋</i><i>直</i><i>径</i></div>
<div class="a t " style="left:221px;top:1009.0px;font-size:15px;line-height:21px;color:#000;font-weight:normal;">28</div>
<div class="a" style="left:42px;top:1055px;width:361px;height:1px;background:#f0f0f0;"></div>
<div class="a" style="left:216px;top:1031px;width:1px;height:25px;background:#f0f0f0;"></div>
<div class="a t " style="left:46px;top:1034.0px;font-size:15px;line-height:21px;color:#000;font-weight:normal;width:170px;overflow:hidden;white-space:nowrap;"><i>墩</i><i>柱</i><i>侧</i><i>面</i><i>主</i><i>筋</i><i>直</i><i>径</i></div>
<div class="a t " style="left:221px;top:1034.0px;font-size:15px;line-height:21px;color:#000;font-weight:normal;">25</div>
<div class="a" style="left:5px;top:1059px;width:421px;height:74px;background:#f0f0f0;border:1px solid #a0a0a0;box-sizing:border-box;"></div>
<div class="a t b" style="left:13px;top:1061.5px;font-size:15px;line-height:21px;color:#000;font-weight:bold;-webkit-text-stroke:0;"><i>竖</i><i>向</i><i>主</i><i>筋</i><i>横</i><i>桥</i><i>间</i><i>距</i></div>
<div class="a t " style="left:13px;top:1086.5px;font-size:15px;line-height:21px;color:#000;font-weight:normal;"><i>竖</i><i>向</i><i>主</i><i>筋</i><i>横</i><i>桥</i><i>间</i><i>距</i>(mm)</div>
<div class="a" style="left:426px;top:231px;width:1px;height:823px;background:#e6e6e6;"></div>
<div class="a" style="left:427px;top:195px;width:1200px;height:939px;background:#f0f0f0;"></div>
<div class="a" style="left:431px;top:197px;width:1192px;height:786px;background:#b3b3b3;border:2px solid #5c5c5c;box-sizing:border-box;"></div>
<svg class="a" style="left:433px;top:199px" width="1188" height="782" viewBox="433 199 1188 782" font-family="Liberation Sans, sans-serif">
<defs>
<clipPath id="cpA"><path d="M557 372 H654 V784 H592 V505 C590 460 575 415 557 372 Z"/></clipPath>
<clipPath id="cpC"><path d="M842 372 H962 L941 519 V784 H862 V519 Z"/></clipPath>
<clipPath id="cpP"><rect x="1299" y="737" width="75" height="112"/></clipPath>
</defs>
<path d="M442.5 255 V230 H467" stroke="#ffffff" stroke-width="1.5" fill="none" />
<path d="M1460 230.5 H1486 V255" stroke="#ffffff" stroke-width="1.5" fill="none" />
<path d="M1460 966.5 H1486 M1485.5 942 V981" stroke="#ffffff" stroke-width="1.5" fill="none" />
<rect x="516.5" y="254.5" width="944" height="687.5" fill="none" stroke="#9c0020" stroke-width="1.3"/>
<path d="M1398.5 255 V279.5 H1460" stroke="#ffffff" stroke-width="1.3" fill="none" />
<path d="M516 254.5 H491.5 V557.5 H516" stroke="#ffffff" stroke-width="1.3" fill="none" />
<line x1="491.5" y1="321" x2="516" y2="321" stroke="#ffffff" stroke-width="1.3" />
<line x1="491.5" y1="358" x2="516" y2="358" stroke="#ffffff" stroke-width="1.3" />
<line x1="491.5" y1="420" x2="516" y2="420" stroke="#ffffff" stroke-width="1.3" />
<line x1="491.5" y1="458" x2="516" y2="458" stroke="#ffffff" stroke-width="1.3" />
<line x1="491.5" y1="520" x2="516" y2="520" stroke="#ffffff" stroke-width="1.3" />
<text x="504" y="340" fill="#ffffff" font-size="11" text-anchor="middle" dominant-baseline="central" transform="rotate(-90 504 340)" textLength="24" lengthAdjust="spacingAndGlyphs">校审</text>
<text x="504" y="441" fill="#ffffff" font-size="11" text-anchor="middle" dominant-baseline="central" transform="rotate(-90 504 441)" textLength="24" lengthAdjust="spacingAndGlyphs">复核</text>
<text x="504" y="540" fill="#ffffff" font-size="11" text-anchor="middle" dominant-baseline="central" transform="rotate(-90 504 540)" textLength="24" lengthAdjust="spacingAndGlyphs">设计</text>
<line x1="516" y1="905.5" x2="1460" y2="905.5" stroke="#ffffff" stroke-width="1.3" />
<line x1="690.5" y1="905.5" x2="690.5" y2="942" stroke="#ffffff" stroke-width="1.3" />
<line x1="941.5" y1="905.5" x2="941.5" y2="942" stroke="#ffffff" stroke-width="1.3" />
<line x1="1149.5" y1="905.5" x2="1149.5" y2="942" stroke="#ffffff" stroke-width="1.3" />
<line x1="1249.5" y1="905.5" x2="1249.5" y2="942" stroke="#ffffff" stroke-width="1.3" />
<line x1="1311.5" y1="905.5" x2="1311.5" y2="942" stroke="#ffffff" stroke-width="1.3" />
<line x1="1149.5" y1="923.5" x2="1311.5" y2="923.5" stroke="#ffffff" stroke-width="1.3" />
<text x="525" y="930" fill="#ffffff" font-size="12" text-anchor="start" font-weight="bold" textLength="101" lengthAdjust="spacingAndGlyphs">路通软件技术有限公司</text>
<text x="817" y="927" fill="#00ff00" font-size="10" text-anchor="middle" textLength="69" lengthAdjust="spacingAndGlyphs">35B_结构篇一_QL</text>
<text x="1045" y="929" fill="#00ff00" font-size="10" text-anchor="middle" font-weight="bold" textLength="67" lengthAdjust="spacingAndGlyphs">墩柱钢筋构造图(一)</text>
<text x="1163" y="920" fill="#ffffff" font-size="10" text-anchor="start" font-weight="bold" textLength="18" lengthAdjust="spacingAndGlyphs">比例</text>
<text x="1163" y="939" fill="#ffffff" font-size="10" text-anchor="start" font-weight="bold" textLength="18" lengthAdjust="spacingAndGlyphs">日期</text>
<text x="1258" y="920" fill="#ffffff" font-size="10" text-anchor="start" font-weight="bold" textLength="33" lengthAdjust="spacing">图    号</text>
<text x="1318" y="930" fill="#ffffff" font-size="13" text-anchor="start" textLength="101" lengthAdjust="spacingAndGlyphs">××交通勘测设计院</text>
<line x1="1314.5" y1="199" x2="1314.5" y2="589" stroke="#3c3c3c" stroke-width="1.2" />
<line x1="1014" y1="289.5" x2="1614" y2="289.5" stroke="#3c3c3c" stroke-width="1.2" />
<rect x="1310.5" y="285.5" width="8" height="8" fill="none" stroke="#3c3c3c" stroke-width="1.2"/>
<path d="M442.5 904 V978 M437 967.5 H482 M437 962 h11 v11 h-11 z" stroke="#ffffff" stroke-width="1.2" fill="none" />
<path d="M438 898 L442.5 904 L447 898" stroke="#ffffff" stroke-width="1" fill="none" />
<path d="M438 928 L442.5 916 L447 928 Z" stroke="#ffffff" stroke-width="1" fill="none" />
<path d="M478 963 L490 967.5 L478 972 Z" stroke="#ffffff" stroke-width="1" fill="none" />
<path d="M500 962 L510 972 M510 962 L500 972" stroke="#ffffff" stroke-width="1.2" fill="none" />
<text x="600" y="330" fill="#00ff00" font-size="12" text-anchor="middle" >1/2A-A</text>
<line x1="583" y1="333.5" x2="617" y2="333.5" stroke="#e8e8e8" stroke-width="1.5" />
<text x="624" y="329" fill="#707070" font-size="8" text-anchor="start" >1:50</text>
<text x="707" y="330" fill="#00ff00" font-size="12" text-anchor="middle" >1/2B-B</text>
<line x1="690" y1="333.5" x2="725" y2="333.5" stroke="#e8e8e8" stroke-width="1.5" />
<text x="731" y="329" fill="#707070" font-size="8" text-anchor="start" >1:50</text>
<path d="M558 347.5 H640 M558 342 V357 M640 342 V357" stroke="#ff0000" stroke-width="1.2" fill="none" />
<text x="599" y="346" fill="#ffff00" font-size="8" text-anchor="middle" >165</text>
<path d="M658 348 H755 M663 343 V358 M672 343 V358 M737 343 V358 M746 343 V358" stroke="#ff0000" stroke-width="1.2" fill="none" />
<text x="669" y="347" fill="#ffff00" font-size="8" text-anchor="middle" >15</text>
<text x="707" y="347" fill="#ffff00" font-size="8" text-anchor="middle" >13x10</text>
<text x="741" y="347" fill="#ffff00" font-size="8" text-anchor="middle" >20</text>
<path d="M537 372 V783 M531 783 H547 M531 372.5 H547" stroke="#ff0000" stroke-width="1.2" fill="none" />
<path d="M546.5 366 V783 M541 372 H556 M541 378 H556 M541 471 H556 M541 481 H556 M541 608 H556 M541 617 H556 M541 714 H556 M541 719 H556 M541 770 H556" stroke="#ff0000" stroke-width="1.2" fill="none" />
<text x="0" y="0" fill="#ffff00" font-size="7" transform="translate(543 437) rotate(-90)">20x10</text>
<text x="0" y="0" fill="#ffff00" font-size="7" transform="translate(543 562) rotate(-90)">13x20</text>
<text x="0" y="0" fill="#ffff00" font-size="7" transform="translate(543 683) rotate(-90)">23x10</text>
<text x="0" y="0" fill="#ffff00" font-size="7" transform="translate(543 762) rotate(-90)">10x10</text>
<text x="0" y="0" fill="#ffff00" font-size="7" transform="translate(534 558) rotate(-90)">700</text>
<text x="0" y="0" fill="#ffff00" font-size="7" transform="translate(534 762) rotate(-90)">150</text>
<g clip-path="url(#cpA)"><path d="M598.5 372 V784 M604.5 372 V784 M609.5 372 V784 M614.5 372 V784 M619.5 372 V784 M624.5 372 V784 M630.5 372 V784 M635.5 372 V784 M646.5 381 V784 M653.5 381 V784 M639.5 381 V400 M560.5 372 C578 415 590.6 460 592.6 505 V784 M565.5 372 C583 415 591.6 460 593.6 505 V784 M550 374.5 H654 M550 379.5 H654 M550 384.5 H654 M550 389.5 H654 M550 393.5 H654 M550 398.5 H654 M550 403.5 H654 M550 408.5 H654 M550 413.5 H654 M550 418.5 H654 M550 423.5 H654 M550 427.5 H654 M550 432.5 H654 M550 437.5 H654 M550 442.5 H654 M550 447.5 H654 M550 452.5 H654 M550 456.5 H654 M550 461.5 H654 M550 466.5 H654 M550 471.5 H654 M550 481.5 H654 M550 491.5 H654 M550 501.5 H654 M550 510.5 H654 M550 520.5 H654 M550 530.5 H654 M550 540.5 H654 M550 550.5 H654 M550 559.5 H654 M550 569.5 H654 M550 579.5 H654 M550 589.5 H654 M550 599.5 H654 M550 617.5 H654 M550 622.5 H654 M550 627.5 H654 M550 632.5 H654 M550 637.5 H654 M550 642.5 H654 M550 647.5 H654 M550 652.5 H654 M550 657.5 H654 M550 662.5 H654 M550 667.5 H654 M550 672.5 H654 M550 677.5 H654 M550 682.5 H654 M550 687.5 H654 M550 692.5 H654 M550 697.5 H654 M550 702.5 H654 M550 707.5 H654 M550 712.5 H654 M550 717.5 H654 M550 722.5 H654 M550 727.5 H654 M550 732.5 H654 M550 737.5 H654 M550 742.5 H654 M550 747.5 H654 M550 752.5 H654 M550 757.5 H654 M550 762.5 H654 M550 767.5 H654" stroke="#ff0000" stroke-width="1" fill="none" shape-rendering="crispEdges"/></g>
<g clip-path="url(#cpA)"><path d="M556.0 374.5 l4 4.85 M561.1 374.5 l4 4.85 M566.3 374.5 l4 4.85 M571.5 374.5 l4 4.85 M576.6 374.5 l4 4.85 M581.8 374.5 l4 4.85 M586.9 374.5 l4 4.85 M592.0 374.5 l4 4.85 M597.2 374.5 l4 4.85 M602.4 374.5 l4 4.85 M607.5 374.5 l4 4.85 M612.6 374.5 l4 4.85 M556.0 379.5 l4 4.85 M561.1 379.5 l4 4.85 M566.3 379.5 l4 4.85 M571.5 379.5 l4 4.85 M576.6 379.5 l4 4.85 M581.8 379.5 l4 4.85 M586.9 379.5 l4 4.85 M592.0 379.5 l4 4.85 M597.2 379.5 l4 4.85 M602.4 379.5 l4 4.85 M607.5 379.5 l4 4.85 M612.6 379.5 l4 4.85 M556.0 384.5 l4 4.85 M561.1 384.5 l4 4.85 M566.3 384.5 l4 4.85 M571.5 384.5 l4 4.85 M576.6 384.5 l4 4.85 M581.8 384.5 l4 4.85 M586.9 384.5 l4 4.85 M592.0 384.5 l4 4.85 M597.2 384.5 l4 4.85 M602.4 384.5 l4 4.85 M607.5 384.5 l4 4.85 M612.6 384.5 l4 4.85 M556.0 389.5 l4 4.85 M561.1 389.5 l4 4.85 M566.3 389.5 l4 4.85 M571.5 389.5 l4 4.85 M576.6 389.5 l4 4.85 M581.8 389.5 l4 4.85 M586.9 389.5 l4 4.85 M592.0 389.5 l4 4.85 M597.2 389.5 l4 4.85 M602.4 389.5 l4 4.85 M607.5 389.5 l4 4.85 M612.6 389.5 l4 4.85 M556.0 393.5 l4 4.85 M561.1 393.5 l4 4.85 M566.3 393.5 l4 4.85 M571.5 393.5 l4 4.85 M576.6 393.5 l4 4.85 M581.8 393.5 l4 4.85 M586.9 393.5 l4 4.85 M592.0 393.5 l4 4.85 M597.2 393.5 l4 4.85 M602.4 393.5 l4 4.85 M607.5 393.5 l4 4.85 M556.0 398.5 l4 4.85 M561.1 398.5 l4 4.85 M566.3 398.5 l4 4.85 M571.5 398.5 l4 4.85 M576.6 398.5 l4 4.85 M581.8 398.5 l4 4.85 M586.9 398.5 l4 4.85 M592.0 398.5 l4 4.85 M597.2 398.5 l4 4.85 M602.4 398.5 l4 4.85 M607.5 398.5 l4 4.85 M556.0 403.5 l4 4.85 M561.1 403.5 l4 4.85 M566.3 403.5 l4 4.85 M571.5 403.5 l4 4.85 M576.6 403.5 l4 4.85 M581.8 403.5 l4 4.85 M586.9 403.5 l4 4.85 M592.0 403.5 l4 4.85 M597.2 403.5 l4 4.85 M602.4 403.5 l4 4.85 M607.5 403.5 l4 4.85 M556.0 408.5 l4 4.85 M561.1 408.5 l4 4.85 M566.3 408.5 l4 4.85 M571.5 408.5 l4 4.85 M576.6 408.5 l4 4.85 M581.8 408.5 l4 4.85 M586.9 408.5 l4 4.85 M592.0 408.5 l4 4.85 M597.2 408.5 l4 4.85 M602.4 408.5 l4 4.85 M607.5 408.5 l4 4.85 M556.0 413.5 l4 4.85 M561.1 413.5 l4 4.85 M566.3 413.5 l4 4.85 M571.5 413.5 l4 4.85 M576.6 413.5 l4 4.85 M581.8 413.5 l4 4.85 M586.9 413.5 l4 4.85 M592.0 413.5 l4 4.85 M597.2 413.5 l4 4.85 M602.4 413.5 l4 4.85 M607.5 413.5 l4 4.85 M556.0 418.5 l4 4.85 M561.1 418.5 l4 4.85 M566.3 418.5 l4 4.85 M571.5 418.5 l4 4.85 M576.6 418.5 l4 4.85 M581.8 418.5 l4 4.85 M586.9 418.5 l4 4.85 M592.0 418.5 l4 4.85 M597.2 418.5 l4 4.85 M602.4 418.5 l4 4.85 M607.5 418.5 l4 4.85 M556.0 423.5 l4 4.85 M561.1 423.5 l4 4.85 M566.3 423.5 l4 4.85 M571.5 423.5 l4 4.85 M576.6 423.5 l4 4.85 M581.8 423.5 l4 4.85 M586.9 423.5 l4 4.85 M592.0 423.5 l4 4.85 M597.2 423.5 l4 4.85 M602.4 423.5 l4 4.85 M607.5 423.5 l4 4.85 M556.0 427.5 l4 4.85 M561.1 427.5 l4 4.85 M566.3 427.5 l4 4.85 M571.5 427.5 l4 4.85 M576.6 427.5 l4 4.85 M581.8 427.5 l4 4.85 M586.9 427.5 l4 4.85 M592.0 427.5 l4 4.85 M597.2 427.5 l4 4.85 M602.4 427.5 l4 4.85 M607.5 427.5 l4 4.85 M556.0 432.5 l4 4.85 M561.1 432.5 l4 4.85 M566.3 432.5 l4 4.85 M571.5 432.5 l4 4.85 M576.6 432.5 l4 4.85 M581.8 432.5 l4 4.85 M586.9 432.5 l4 4.85 M592.0 432.5 l4 4.85 M597.2 432.5 l4 4.85 M602.4 432.5 l4 4.85 M607.5 432.5 l4 4.85 M556.0 437.5 l4 4.85 M561.1 437.5 l4 4.85 M566.3 437.5 l4 4.85 M571.5 437.5 l4 4.85 M576.6 437.5 l4 4.85 M581.8 437.5 l4 4.85 M586.9 437.5 l4 4.85 M592.0 437.5 l4 4.85 M597.2 437.5 l4 4.85 M602.4 437.5 l4 4.85 M556.0 442.5 l4 4.85 M561.1 442.5 l4 4.85 M566.3 442.5 l4 4.85 M571.5 442.5 l4 4.85 M576.6 442.5 l4 4.85 M581.8 442.5 l4 4.85 M586.9 442.5 l4 4.85 M592.0 442.5 l4 4.85 M597.2 442.5 l4 4.85 M602.4 442.5 l4 4.85 M556.0 447.5 l4 4.85 M561.1 447.5 l4 4.85 M566.3 447.5 l4 4.85 M571.5 447.5 l4 4.85 M576.6 447.5 l4 4.85 M581.8 447.5 l4 4.85 M586.9 447.5 l4 4.85 M592.0 447.5 l4 4.85 M597.2 447.5 l4 4.85 M602.4 447.5 l4 4.85 M556.0 452.5 l4 4.85 M561.1 452.5 l4 4.85 M566.3 452.5 l4 4.85 M571.5 452.5 l4 4.85 M576.6 452.5 l4 4.85 M581.8 452.5 l4 4.85 M586.9 452.5 l4 4.85 M592.0 452.5 l4 4.85 M597.2 452.5 l4 4.85 M602.4 452.5 l4 4.85 M556.0 456.5 l4 4.85 M561.1 456.5 l4 4.85 M566.3 456.5 l4 4.85 M571.5 456.5 l4 4.85 M576.6 456.5 l4 4.85 M581.8 456.5 l4 4.85 M586.9 456.5 l4 4.85 M592.0 456.5 l4 4.85 M597.2 456.5 l4 4.85 M602.4 456.5 l4 4.85 M556.0 461.5 l4 4.85 M561.1 461.5 l4 4.85 M566.3 461.5 l4 4.85 M571.5 461.5 l4 4.85 M576.6 461.5 l4 4.85 M581.8 461.5 l4 4.85 M586.9 461.5 l4 4.85 M592.0 461.5 l4 4.85 M597.2 461.5 l4 4.85 M602.4 461.5 l4 4.85 M556.0 466.5 l4 4.85 M561.1 466.5 l4 4.85 M566.3 466.5 l4 4.85 M571.5 466.5 l4 4.85 M576.6 466.5 l4 4.85 M581.8 466.5 l4 4.85 M586.9 466.5 l4 4.85 M592.0 466.5 l4 4.85 M597.2 466.5 l4 4.85 M602.4 466.5 l4 4.85 M556.0 471.5 l4 4.85 M561.1 471.5 l4 4.85 M566.3 471.5 l4 4.85 M571.5 471.5 l4 4.85 M576.6 471.5 l4 4.85 M581.8 471.5 l4 4.85 M586.9 471.5 l4 4.85 M592.0 471.5 l4 4.85 M597.2 471.5 l4 4.85 M602.4 471.5 l4 4.85 M556.0 481.5 l4 4.85 M561.1 481.5 l4 4.85 M566.3 481.5 l4 4.85 M571.5 481.5 l4 4.85 M576.6 481.5 l4 4.85 M581.8 481.5 l4 4.85 M586.9 481.5 l4 4.85 M592.0 481.5 l4 4.85 M597.2 481.5 l4 4.85 M556.0 491.5 l4 4.85 M561.1 491.5 l4 4.85 M566.3 491.5 l4 4.85 M571.5 491.5 l4 4.85 M576.6 491.5 l4 4.85 M581.8 491.5 l4 4.85 M586.9 491.5 l4 4.85 M592.0 491.5 l4 4.85 M597.2 491.5 l4 4.85" stroke="#ff0000" stroke-width="1" fill="none"/></g>
<path d="M610 480 V690 M616 470 V690 M622 460 V690 M628 450 V690" stroke="#ff0000" stroke-width="1" fill="none" />
<path d="M557.5 372 C575 415 590 460 592 505 V718" stroke="#ffffff" stroke-width="1.5" fill="none" />
<path d="M557 372 H640 V381.5 H653" stroke="#ffffff" stroke-width="1.5" fill="none" />
<path d="M636 372 V718 M641 381 V718" stroke="#ffffff" stroke-width="1.3" fill="none" />
<path d="M563 378 C578 418 592 462 596 510 V770" stroke="#808080" stroke-width="1" fill="none" stroke-dasharray="3 1"/>
<path d="M653.5 370 V800" stroke="#ff0000" stroke-width="1.2" fill="none" />
<path d="M648 365 L653.5 355 L659 365 Z" stroke="#ff0000" stroke-width="1" fill="#ff0000" />
<path d="M578.5 718 V795.5 H727.5 V718" stroke="#808080" stroke-width="1.3" fill="none" />
<line x1="578.5" y1="718" x2="727.5" y2="718" stroke="#ffffff" stroke-width="1.5" />
<path d="M665 372 H748" stroke="#ffffff" stroke-width="1.5" fill="none" />
<path d="M748 372 C738 420 718 460 715.5 500 V718" stroke="#ffffff" stroke-width="1.5" fill="none" />
<path d="M752 378 L758 386 C748 425 728 465 723 510 V795" stroke="#808080" stroke-width="1.2" fill="none" />
<path d="M664 372 V381 M661.5 381 V783" stroke="#808080" stroke-width="1.2" fill="none" />
<path d="M666.5 374 V783 M671.5 374 V783" stroke="#ff0000" stroke-width="1.2" fill="none" />
<path d="M673 375 H745 M673 380 H743 M673 385 H741" stroke="#ff0000" stroke-width="1.2" fill="none" />
<path d="M700 387 L728 422 M725 387 L736 403" stroke="#ff0000" stroke-width="1.2" fill="none" />
<path d="M744.5 376 C734 422 714 462 712.5 502 V783" stroke="#ff0000" stroke-width="1.2" fill="none" />
<path d="M682.5 385 V783 M693 385 V783 M700.5 385 V783" stroke="#808080" stroke-width="1.1" fill="none" />
<path d="M665 386 V783 M680 386 V783 M702 386 V783 M714 540 V783" stroke="#00ff00" stroke-width="1.1" fill="none" stroke-dasharray="1 7"/>
<path d="M661.5 500 l4 -5 M661.5 530 l4 5 M661.5 600 l4 -5 M661.5 770 l4 -5 M682.5 500 l-3 -4 M682.5 530 l-3 4 M693 500 l3 -4 M693 530 l3 4 M700.5 500 l-3 -4 M700.5 530 l-3 4" stroke="#808080" stroke-width="1" fill="none" />
<path d="M723 520 l-8 6 M723 528 l-8 6 M723 536 l-8 6 M723 600 l-8 -6 M723 608 l-8 -6 M723 760 l-8 6 M723 768 l-8 6 M723 776 l-8 6" stroke="#808080" stroke-width="1" fill="none" />
<path d="M672 372 L680 364 H745 L752 372" stroke="#808080" stroke-width="1" fill="none" />
<path d="M682 372 L688 364 M688 372 L694 364 M694 372 L700 364 M700 372 L706 364 M720 364 L726 372 M726 364 L732 372 M732 364 L738 372 M738 364 L744 372" stroke="#808080" stroke-width="1" fill="none" />
<circle cx="597" cy="363" r="4.5" fill="none" stroke="#808080" stroke-width="1.2"/>
<text x="597" y="366" fill="#00ff00" font-size="7" text-anchor="middle" >7</text>
<circle cx="553" cy="384" r="4.5" fill="none" stroke="#808080" stroke-width="1.2"/>
<text x="553" y="387" fill="#00ff00" font-size="7" text-anchor="middle" >8</text>
<circle cx="706" cy="364" r="4.5" fill="none" stroke="#808080" stroke-width="1.2"/>
<text x="706" y="367" fill="#00ff00" font-size="7" text-anchor="middle" >12</text>
<circle cx="746" cy="361" r="4.5" fill="none" stroke="#808080" stroke-width="1.2"/>
<text x="746" y="364" fill="#00ff00" font-size="7" text-anchor="middle" >13</text>
<circle cx="663" cy="397" r="4.5" fill="none" stroke="#808080" stroke-width="1.2"/>
<text x="663" y="400" fill="#00ff00" font-size="7" text-anchor="middle" >K</text>
<circle cx="576" cy="513" r="4.5" fill="none" stroke="#808080" stroke-width="1.2"/>
<text x="576" y="516" fill="#00ff00" font-size="7" text-anchor="middle" >5a</text>
<circle cx="584" cy="513" r="4.5" fill="none" stroke="#808080" stroke-width="1.2"/>
<text x="584" y="516" fill="#00ff00" font-size="7" text-anchor="middle" >5b</text>
<circle cx="581" cy="580" r="4.5" fill="none" stroke="#808080" stroke-width="1.2"/>
<text x="581" y="583" fill="#00ff00" font-size="7" text-anchor="middle" >1a</text>
<circle cx="581" cy="590" r="4.5" fill="none" stroke="#808080" stroke-width="1.2"/>
<text x="581" y="593" fill="#00ff00" font-size="7" text-anchor="middle" >2</text>
<circle cx="581" cy="597" r="4.5" fill="none" stroke="#808080" stroke-width="1.2"/>
<text x="581" y="600" fill="#00ff00" font-size="7" text-anchor="middle" >1</text>
<circle cx="566" cy="773" r="4.5" fill="none" stroke="#808080" stroke-width="1.2"/>
<text x="566" y="776" fill="#00ff00" font-size="7" text-anchor="middle" >5</text>
<circle cx="584" cy="773" r="4.5" fill="none" stroke="#808080" stroke-width="1.2"/>
<text x="584" y="776" fill="#00ff00" font-size="7" text-anchor="middle" >3</text>
<path d="M553 800 V805 H562" stroke="#ffffff" stroke-width="1" fill="none" />
<text x="567" y="808" fill="#00ff00" font-size="8" text-anchor="start" >C</text>
<path d="M615 800 V805 H622" stroke="#ffffff" stroke-width="1" fill="none" />
<text x="627" y="808" fill="#00ff00" font-size="8" text-anchor="start" >D</text>
<path d="M533 362 V371 H555" stroke="#ffffff" stroke-width="1" fill="none" />
<text x="566" y="366" fill="#00ff00" font-size="8" text-anchor="start" >C</text>
<path d="M614 362 V371 H622" stroke="#ffffff" stroke-width="1" fill="none" />
<text x="627" y="366" fill="#00ff00" font-size="8" text-anchor="start" >D</text>
<path d="M581 712 V705 H590 M718 712 V705 H726" stroke="#ffffff" stroke-width="1" fill="none" />
<text x="582" y="721" fill="#00ff00" font-size="7" text-anchor="start" >E</text>
<text x="726" y="721" fill="#00ff00" font-size="7" text-anchor="start" >E</text>
<path d="M524 374 V378 M524 381 V389" stroke="#00ff00" stroke-width="1" fill="none" />
<path d="M762 370 H780 M780 370 V384" stroke="#ffffff" stroke-width="1" fill="none" />
<text x="781" y="392" fill="#00ff00" font-size="7" text-anchor="start" >F</text>
<text x="0" y="0" fill="#00ff00" font-size="6" transform="translate(661 440) rotate(-90)">N5</text>
<text x="0" y="0" fill="#00ff00" font-size="6" transform="translate(690 445) rotate(-90)">N6N6</text>
<text x="0" y="0" fill="#00ff00" font-size="6" transform="translate(737 455) rotate(-90)">N4,N6</text>
<text x="0" y="0" fill="#00ff00" font-size="6" transform="translate(659 655) rotate(-90)">N5</text>
<text x="0" y="0" fill="#00ff00" font-size="6" transform="translate(688 655) rotate(-90)">N6N6</text>
<text x="0" y="0" fill="#00ff00" font-size="6" transform="translate(728 660) rotate(-90)">N4,N6</text>
<path d="M582 674 H602 M708 674 H724 M592 670 V680 M714 670 V680" stroke="#00ff00" stroke-width="1" fill="none" />
<path d="M587 674 H597 M710 674 H720" stroke="#ff0000" stroke-width="2" fill="none" />
<path d="M768 365 V395 M760 374 H776 M760 385 H776" stroke="#ff0000" stroke-width="1.2" fill="none" />
<text x="901" y="333" fill="#00ff00" font-size="11" text-anchor="middle" >C-C</text>
<line x1="890" y1="337.5" x2="912" y2="337.5" stroke="#e8e8e8" stroke-width="1.5" />
<text x="921" y="333" fill="#707070" font-size="8" text-anchor="start" >1:50</text>
<path d="M841.5 356 H962 M841.5 350 V365 M962 350 V365" stroke="#ff0000" stroke-width="1.2" fill="none" />
<text x="901" y="354" fill="#ffff00" font-size="8" text-anchor="middle" >240</text>
<g clip-path="url(#cpC)"><path d="M846.5 372 L865.5 519 V784 M854.5 372 L870.7 519 V784 M862.5 372 L875.9 519 V784 M870.5 372 L881.1 519 V784 M878.5 372 L886.3 519 V784 M886.5 372 L891.5 519 V784 M894.5 372 L896.7 519 V784 M902.5 372 L901.9 519 V784 M910.5 372 L907.1 519 V784 M918.5 372 L912.3 519 V784 M926.5 372 L917.5 519 V784 M934.5 372 L922.7 519 V784 M942.5 372 L927.9 519 V784 M950.5 372 L933.1 519 V784 M958.5 372 L938.3 519 V784 M835 374.5 Q901 377.5 970 374.5 M835 379.5 Q901 382.5 970 379.5 M835 385.5 Q901 388.5 970 385.5 M835 390.5 Q901 393.5 970 390.5 M835 396.5 Q901 399.5 970 396.5 M835 401.5 Q901 404.5 970 401.5 M835 406.5 Q901 409.5 970 406.5 M835 412.5 Q901 415.5 970 412.5 M835 417.5 Q901 420.5 970 417.5 M835 423.5 Q901 426.5 970 423.5 M835 428.5 Q901 431.5 970 428.5 M835 433.5 Q901 436.5 970 433.5 M835 439.5 Q901 442.5 970 439.5 M835 444.5 Q901 447.5 970 444.5 M835 450.5 Q901 453.5 970 450.5 M835 455.5 Q901 458.5 970 455.5 M835 460.5 Q901 463.5 970 460.5 M835 466.5 Q901 469.5 970 466.5 M835 479.5 Q901 482.5 970 479.5 M835 489.5 Q901 492.5 970 489.5 M835 498.5 Q901 501.5 970 498.5 M835 508.5 Q901 511.5 970 508.5 M835 517.5 Q901 520.5 970 517.5 M835 527.5 H970 M835 537.5 H970 M835 546.5 H970 M835 556.5 H970 M835 565.5 H970 M835 575.5 H970 M835 585.5 H970 M835 594.5 H970 M835 604.5 H970 M835 617.5 H970 M835 622.5 H970 M835 627.5 H970 M835 632.5 H970 M835 637.5 H970 M835 642.5 H970 M835 647.5 H970 M835 652.5 H970 M835 657.5 H970 M835 662.5 H970 M835 667.5 H970 M835 672.5 H970 M835 677.5 H970 M835 682.5 H970 M835 687.5 H970 M835 692.5 H970 M835 697.5 H970 M835 702.5 H970 M835 707.5 H970 M835 712.5 H970 M835 717.5 H970 M835 722.5 H970 M835 727.5 H970 M835 732.5 H970 M835 737.5 H970 M835 742.5 H970 M835 747.5 H970 M835 752.5 H970 M835 757.5 H970 M835 762.5 H970 M835 767.5 H970" stroke="#ff0000" stroke-width="1" fill="none" shape-rendering="crispEdges"/></g>
<path d="M845 374 L865 519 V784 M959 374 L938.5 519 V784" stroke="#ff0000" stroke-width="2" fill="none" />
<path d="M841.5 372 H962 L941 519 V718 H955 V795.5 H849 V718 H862 V519 Z" stroke="#ffffff" stroke-width="1.4" fill="none" />
<path d="M849 718 V795.5 H955 V718" stroke="#808080" stroke-width="1.3" fill="none" />
<path d="M944 372 L924 515 V776 H946" stroke="#808080" stroke-width="1.1" fill="none" />
<path d="M862 659 H946 M862 669 H946" stroke="#808080" stroke-width="1" fill="none" />
<circle cx="950" cy="515" r="4.5" fill="none" stroke="#808080" stroke-width="1.2"/>
<text x="950" y="518" fill="#00ff00" font-size="7" text-anchor="middle" >6</text>
<circle cx="950" cy="659" r="4.5" fill="none" stroke="#808080" stroke-width="1.2"/>
<text x="950" y="662" fill="#00ff00" font-size="7" text-anchor="middle" >1a</text>
<circle cx="950" cy="669" r="4.5" fill="none" stroke="#808080" stroke-width="1.2"/>
<text x="950" y="672" fill="#00ff00" font-size="7" text-anchor="middle" >2</text>
<circle cx="950" cy="776" r="4.5" fill="none" stroke="#808080" stroke-width="1.2"/>
<text x="950" y="779" fill="#00ff00" font-size="7" text-anchor="middle" >3</text>
<path d="M820 372 V783 M814 783 H830 M814 372.5 H830" stroke="#ff0000" stroke-width="1.2" fill="none" />
<path d="M829.5 366 V783 M824 372 H838 M824 378 H838 M824 471 H838 M824 479 H838 M824 608 H838 M824 616 H838 M824 718 H838 M824 722 H838 M824 771 H838" stroke="#ff0000" stroke-width="1.2" fill="none" />
<text x="0" y="0" fill="#ffff00" font-size="7" transform="translate(826 430) rotate(-90)">20x10</text>
<text x="0" y="0" fill="#ffff00" font-size="7" transform="translate(826 565) rotate(-90)">13x20</text>
<text x="0" y="0" fill="#ffff00" font-size="7" transform="translate(826 685) rotate(-90)">23x10</text>
<text x="0" y="0" fill="#ffff00" font-size="7" transform="translate(826 760) rotate(-90)">10x10</text>
<text x="0" y="0" fill="#ffff00" font-size="7" transform="translate(817 560) rotate(-90)">700</text>
<text x="0" y="0" fill="#ffff00" font-size="7" transform="translate(817 760) rotate(-90)">150</text>
<path d="M854 525 H872 M930 525 H948 M863 519 V530 M940 519 V530" stroke="#ff0000" stroke-width="1.1" fill="none" />
<text x="862" y="522" fill="#ffff00" font-size="7" text-anchor="middle" >6</text>
<text x="940" y="522" fill="#ffff00" font-size="7" text-anchor="middle" >6</text>
<text x="1111" y="333" fill="#00ff00" font-size="11" text-anchor="middle" >D-D</text>
<line x1="1101" y1="337.5" x2="1122" y2="337.5" stroke="#e8e8e8" stroke-width="1.5" />
<text x="1131" y="333" fill="#707070" font-size="8" text-anchor="start" >1:50</text>
<path d="M1052.5 356 H1172 M1052.5 350 V365 M1172 350 V365" stroke="#ff0000" stroke-width="1.2" fill="none" />
<text x="1112" y="354" fill="#ffff00" font-size="8" text-anchor="middle" >240</text>
<path d="M1052.5 372 H1172 L1153 519 V718 H1164 V795.5 H1060.5 V718 H1074 V519 Z" stroke="#ffffff" stroke-width="1.4" fill="none" />
<path d="M1060.5 718 V795.5 H1164 V718" stroke="#808080" stroke-width="1.3" fill="none" />
<path d="M1058 376 H1167 M1058 381 H1166 M1058 386 H1165" stroke="#ff0000" stroke-width="1.3" fill="none" />
<path d="M1057 374 L1074.5 519 V783 M1167 374 L1150.5 519 V783" stroke="#ff0000" stroke-width="1.3" fill="none" />
<path d="M1050 385 L1067 519 V770 M1175 385 L1158 519 V770" stroke="#808080" stroke-width="1.1" fill="none" />
<path d="M1062 372 L1055 378 L1057 390 M1163 372 L1170 378 L1168 390" stroke="#808080" stroke-width="1" fill="none" />
<path d="M1078 390 L1090.5 519 V775 M1089 390 L1100 519 V775 M1149 390 L1135 519 V775 M1138 390 L1125 519 V775" stroke="#808080" stroke-width="1.1" fill="none" />
<path d="M1062 372 L1068 364 H1158 L1164 372" stroke="#808080" stroke-width="1" fill="none" />
<path d="M1068 372 L1074 364 M1074 372 L1080 364 M1080 372 L1086 364 M1086 372 L1092 364 M1092 372 L1098 364 M1098 372 L1104 364 M1128 364 L1134 372 M1134 364 L1140 372 M1140 364 L1146 372 M1146 364 L1152 372 M1152 364 L1158 372 M1158 364 L1164 372" stroke="#808080" stroke-width="1" fill="none" />
<path d="M1046.5 380 L1071 510 M1178 380 L1153.5 510 M1046.5 380 L1053 372 M1178 380 L1171 372" stroke="#808080" stroke-width="1" fill="none" />
<path d="M1060 392 L1077 519 V783 M1084 392 L1095 519 V783 M1143 392 L1130 519 V783 M1165 392 L1148 519 V783" stroke="#00ff00" stroke-width="1.1" fill="none" stroke-dasharray="1 7"/>
<path d="M1066 500 l6 -8 M1066 507 l6 -8 M1066 540 l6 -8 M1066 747 l6 8 M1066 752 l6 8" stroke="#808080" stroke-width="1" fill="none" />
<path d="M1159 500 l-6 -8 M1159 507 l-6 -8 M1159 540 l-6 -8 M1159 747 l-6 8 M1159 752 l-6 8" stroke="#808080" stroke-width="1" fill="none" />
<path d="M1075 669.5 H1162" stroke="#808080" stroke-width="1" fill="none" />
<circle cx="1112" cy="365" r="4.5" fill="none" stroke="#808080" stroke-width="1.2"/>
<text x="1112" y="368" fill="#00ff00" font-size="7" text-anchor="middle" >13</text>
<circle cx="1166" cy="359" r="4.5" fill="none" stroke="#808080" stroke-width="1.2"/>
<text x="1166" y="362" fill="#00ff00" font-size="7" text-anchor="middle" >12</text>
<circle cx="1166" cy="669" r="4.5" fill="none" stroke="#808080" stroke-width="1.2"/>
<text x="1166" y="672" fill="#00ff00" font-size="7" text-anchor="middle" >1</text>
<path d="M1031 372 V783 M1025 783 H1041 M1025 372.5 H1041" stroke="#ff0000" stroke-width="1.2" fill="none" />
<path d="M1040.5 366 V783 M1035 372 H1050 M1035 378 H1050 M1035 471 H1050 M1035 479 H1050 M1035 608 H1050 M1035 616 H1050 M1035 718 H1050 M1035 722 H1050 M1035 771 H1050" stroke="#ff0000" stroke-width="1.2" fill="none" />
<text x="0" y="0" fill="#ffff00" font-size="7" transform="translate(1037 430) rotate(-90)">20x10</text>
<text x="0" y="0" fill="#ffff00" font-size="7" transform="translate(1037 565) rotate(-90)">13x20</text>
<text x="0" y="0" fill="#ffff00" font-size="7" transform="translate(1037 685) rotate(-90)">23x10</text>
<text x="0" y="0" fill="#ffff00" font-size="7" transform="translate(1037 760) rotate(-90)">10x10</text>
<text x="0" y="0" fill="#ffff00" font-size="7" transform="translate(1028 560) rotate(-90)">700</text>
<text x="0" y="0" fill="#ffff00" font-size="7" transform="translate(1028 760) rotate(-90)">150</text>
<text x="0" y="0" fill="#00ff00" font-size="6" transform="translate(1058 455) rotate(-90)">N3a,N4d</text>
<text x="0" y="0" fill="#00ff00" font-size="6" transform="translate(1088 445) rotate(-90)">N5</text>
<text x="0" y="0" fill="#00ff00" font-size="6" transform="translate(1100 445) rotate(-90)">N6</text>
<text x="0" y="0" fill="#00ff00" font-size="6" transform="translate(1128 445) rotate(-90)">N6</text>
<text x="0" y="0" fill="#00ff00" font-size="6" transform="translate(1140 445) rotate(-90)">N5</text>
<text x="0" y="0" fill="#00ff00" font-size="6" transform="translate(1177 455) rotate(-90)">N3a,N4d</text>
<text x="0" y="0" fill="#00ff00" font-size="6" transform="translate(1066 665) rotate(-90)">N3,N4</text>
<text x="0" y="0" fill="#00ff00" font-size="6" transform="translate(1098 655) rotate(-90)">N5 N6</text>
<text x="0" y="0" fill="#00ff00" font-size="6" transform="translate(1138 655) rotate(-90)">N6 N5</text>
<text x="0" y="0" fill="#00ff00" font-size="6" transform="translate(1175 665) rotate(-90)">N3,N4</text>
<path d="M1065 525 H1083 M1142 525 H1160 M1074 519 V530 M1151 519 V530" stroke="#ff0000" stroke-width="1.1" fill="none" />
<text x="1334" y="318" fill="#00ff00" font-size="11" text-anchor="middle" >G-G</text>
<line x1="1323" y1="319.5" x2="1344" y2="319.5" stroke="#e8e8e8" stroke-width="1.5" />
<text x="1350" y="317" fill="#707070" font-size="7" text-anchor="start" >1:50</text>
<rect x="1295.5" y="336.5" width="81" height="119" rx="5" fill="none" stroke="#ffffff" stroke-width="1.4"/>
<rect x="1297" y="338" width="78" height="116" rx="4" fill="none" stroke="#ff0000" stroke-width="1.2"/>
<path d="M1296 355.5 H1376 M1296 369.5 H1376 M1296 422.5 H1376 M1296 437.5 H1376 M1307 337 V455 M1318.5 337 V455 M1362.5 337 V455" stroke="#ff0000" stroke-width="1.3" fill="none" />
<path d="M1302.5 327 V452 M1368.5 322 V440" stroke="#808080" stroke-width="1.1" fill="none" />
<path d="M1296 346 L1288 350 M1376 346 L1384 350" stroke="#808080" stroke-width="1" fill="none" />
<path d="M1296 355 L1288 359 M1376 355 L1384 359" stroke="#808080" stroke-width="1" fill="none" />
<path d="M1296 364 L1288 368 M1376 364 L1384 368" stroke="#808080" stroke-width="1" fill="none" />
<path d="M1296 373 L1288 377 M1376 373 L1384 377" stroke="#808080" stroke-width="1" fill="none" />
<path d="M1296 418 L1288 422 M1376 418 L1384 422" stroke="#808080" stroke-width="1" fill="none" />
<path d="M1296 427 L1288 431 M1376 427 L1384 431" stroke="#808080" stroke-width="1" fill="none" />
<path d="M1296 436 L1288 440 M1376 436 L1384 440" stroke="#808080" stroke-width="1" fill="none" />
<path d="M1296 445 L1288 449 M1376 445 L1384 449" stroke="#808080" stroke-width="1" fill="none" />
<path d="M1288 350 V447 M1384 350 V447" stroke="#808080" stroke-width="1" fill="none" />
<path d="M1308 337 Q1314 328 1322 337 M1327 337 Q1333 328 1341 337 M1345 337 Q1351 328 1359 337" stroke="#808080" stroke-width="1" fill="none" />
<path d="M1308 455 Q1314 464 1322 455 M1327 455 Q1333 464 1341 455 M1345 455 Q1351 464 1359 455" stroke="#808080" stroke-width="1" fill="none" />
<path d="M1300 338 H1372 M1300 454 H1372" stroke="#00ff00" stroke-width="1" fill="none" stroke-dasharray="1 5"/>
<circle cx="1302" cy="327" r="4.5" fill="none" stroke="#808080" stroke-width="1.2"/>
<text x="1302" y="330" fill="#00ff00" font-size="7" text-anchor="middle" >1</text>
<circle cx="1317" cy="331" r="4.5" fill="none" stroke="#808080" stroke-width="1.2"/>
<text x="1317" y="334" fill="#00ff00" font-size="7" text-anchor="middle" >1</text>
<circle cx="1354" cy="331" r="4.5" fill="none" stroke="#808080" stroke-width="1.2"/>
<text x="1354" y="334" fill="#00ff00" font-size="7" text-anchor="middle" >1</text>
<circle cx="1368" cy="322" r="4.5" fill="none" stroke="#808080" stroke-width="1.2"/>
<text x="1368" y="325" fill="#00ff00" font-size="7" text-anchor="middle" >9</text>
<circle cx="1288" cy="396" r="4.5" fill="none" stroke="#808080" stroke-width="1.2"/>
<text x="1288" y="399" fill="#00ff00" font-size="7" text-anchor="middle" >2</text>
<circle cx="1383" cy="396" r="4.5" fill="none" stroke="#808080" stroke-width="1.2"/>
<text x="1383" y="399" fill="#00ff00" font-size="7" text-anchor="middle" >10</text>
<circle cx="1317" cy="461" r="4.5" fill="none" stroke="#808080" stroke-width="1.2"/>
<text x="1317" y="464" fill="#00ff00" font-size="7" text-anchor="middle" >1</text>
<circle cx="1354" cy="461" r="4.5" fill="none" stroke="#808080" stroke-width="1.2"/>
<text x="1354" y="464" fill="#00ff00" font-size="7" text-anchor="middle" >1</text>
<path d="M1268 336.5 V455.5 M1262 336.5 H1288 M1262 455.5 H1288 M1280.5 329 V463 M1276 345 H1288 M1276 446 H1288" stroke="#ff0000" stroke-width="1.2" fill="none" />
<text x="0" y="0" fill="#ffff00" font-size="7" transform="translate(1266 405) rotate(-90)">240</text>
<text x="0" y="0" fill="#ffff00" font-size="7" transform="translate(1278 412) rotate(-90)">12x17</text>
<text x="0" y="0" fill="#00ff00" font-size="6" transform="translate(1306 404) rotate(-90)">N3a</text>
<text x="0" y="0" fill="#00ff00" font-size="6" transform="translate(1318 404) rotate(-90)">N3a</text>
<text x="0" y="0" fill="#00ff00" font-size="6" transform="translate(1362 404) rotate(-90)">N4a</text>
<path d="M1287 475.5 H1385 M1296 470 V481 M1303 470 V481 M1336 470 V481 M1340 470 V481 M1369 470 V481 M1375 470 V481" stroke="#ff0000" stroke-width="1.2" fill="none" />
<path d="M1295.5 486.5 H1376 M1295.5 481 V492 M1376 481 V492" stroke="#ff0000" stroke-width="1.2" fill="none" />
<text x="1299" y="473" fill="#ffff00" font-size="6" text-anchor="middle" >18</text>
<text x="1318" y="473" fill="#ffff00" font-size="6" text-anchor="middle" >3x9.3</text>
<text x="1338" y="473" fill="#ffff00" font-size="6" text-anchor="middle" >5.5</text>
<text x="1354" y="473" fill="#ffff00" font-size="6" text-anchor="middle" >6x10</text>
<text x="1372" y="473" fill="#ffff00" font-size="6" text-anchor="middle" >12.1</text>
<text x="1336" y="484" fill="#ffff00" font-size="6" text-anchor="middle" >165</text>
<path d="M1367 400 H1384 M1375 392 V408" stroke="#ff0000" stroke-width="1.5" fill="none" />
<path d="M1338 455 H1345 M1340 448 V463" stroke="#ff0000" stroke-width="1.5" fill="none" />
<text x="1336" y="552" fill="#00ff00" font-size="9" text-anchor="middle" font-weight="bold" textLength="82" lengthAdjust="spacingAndGlyphs">墩顶纵向加强钢筋示意图</text>
<line x1="1295" y1="555.5" x2="1377" y2="555.5" stroke="#e8e8e8" stroke-width="1.5" />
<text x="1385" y="552" fill="#707070" font-size="7" text-anchor="start" >1:50</text>
<path d="M1276 568.5 H1395.5 M1276 563 V588 M1395.5 563 V588" stroke="#ff0000" stroke-width="1.2" fill="none" />
<path d="M1268 579.5 H1404 M1285.5 575 V588 M1386.5 575 V588" stroke="#ff0000" stroke-width="1.2" fill="none" />
<text x="1336" y="566" fill="#ffff00" font-size="7" text-anchor="middle" >240</text>
<text x="1336" y="577" fill="#ffff00" font-size="7" text-anchor="middle" >12x17</text>
<text x="1280" y="577" fill="#ffff00" font-size="7" text-anchor="middle" >18</text>
<text x="1391" y="577" fill="#ffff00" font-size="7" text-anchor="middle" >18</text>
<path d="M1276 594.5 H1395.5 L1391 634 M1276 594.5 L1281 634" stroke="#ffffff" stroke-width="1.4" fill="none" />
<path d="M1279 634.5 H1393" stroke="#808080" stroke-width="1.2" fill="none" />
<path d="M1290 591 H1381 L1387 600.5 L1381 609.5 H1290 L1284 600.5 Z M1306 591 L1300 600.5 L1306 609.5 M1365 591 L1371 600.5 L1365 609.5" stroke="#808080" stroke-width="1.1" fill="none" />
<path d="M1286 600.5 H1386" stroke="#00ff00" stroke-width="1.2" fill="none" stroke-dasharray="1 7"/>
<circle cx="1336" cy="591" r="4.5" fill="none" stroke="#808080" stroke-width="1.2"/>
<text x="1336" y="594" fill="#00ff00" font-size="7" text-anchor="middle" >11</text>
<circle cx="1336" cy="610" r="4.5" fill="none" stroke="#808080" stroke-width="1.2"/>
<text x="1336" y="613" fill="#00ff00" font-size="7" text-anchor="middle" >11a</text>
<path d="M1257 594.5 H1269 M1257 599.5 H1269 M1261.5 587 V608" stroke="#ff0000" stroke-width="1.2" fill="none" />
<text x="1336" y="709" fill="#00ff00" font-size="9" text-anchor="middle" font-weight="bold" textLength="74" lengthAdjust="spacingAndGlyphs">垫石底局部加强钢筋网</text>
<line x1="1299" y1="711.5" x2="1373" y2="711.5" stroke="#e8e8e8" stroke-width="1.5" />
<text x="1385" y="709" fill="#707070" font-size="7" text-anchor="start" >1:50</text>
<rect x="1295.5" y="733.5" width="81.5" height="120" rx="5" fill="none" stroke="#ffffff" stroke-width="1.4"/>
<path d="M1300.5 737 V849 M1305.5 737 V849 M1310.5 737 V849 M1316.5 737 V849 M1321.5 737 V849 M1326.5 737 V849 M1331.5 737 V849 M1336.5 737 V849 M1342.5 737 V849 M1347.5 737 V849 M1352.5 737 V849 M1357.5 737 V849 M1362.5 737 V849 M1368.5 737 V849 M1373.5 737 V849 M1299 738.5 H1374 M1299 743.5 H1374 M1299 748.5 H1374 M1299 754.5 H1374 M1299 759.5 H1374 M1299 764.5 H1374 M1299 770.5 H1374 M1299 775.5 H1374 M1299 780.5 H1374 M1299 785.5 H1374 M1299 790.5 H1374 M1299 796.5 H1374 M1299 801.5 H1374 M1299 806.5 H1374 M1299 812.5 H1374 M1299 817.5 H1374 M1299 822.5 H1374 M1299 827.5 H1374 M1299 832.5 H1374 M1299 838.5 H1374 M1299 843.5 H1374 M1299 848.5 H1374" stroke="#ff0000" stroke-width="1" fill="none" shape-rendering="crispEdges"/>
<path d="M1314.5 725 V848 M1283 833.5 H1370" stroke="#808080" stroke-width="1.1" fill="none" />
<circle cx="1314" cy="725" r="4.5" fill="none" stroke="#808080" stroke-width="1.2"/>
<text x="1314" y="728" fill="#00ff00" font-size="7" text-anchor="middle" >12</text>
<circle cx="1283" cy="833" r="4.5" fill="none" stroke="#808080" stroke-width="1.2"/>
<text x="1283" y="836" fill="#00ff00" font-size="7" text-anchor="middle" >13</text>
<path d="M1394.5 737 V861 M1386 733.5 H1402 M1386 741 H1400 M1386 845 H1400 M1406 733.5 V853.5 M1390 853.5 H1411" stroke="#ff0000" stroke-width="1.2" fill="none" />
<text x="0" y="0" fill="#ffff00" font-size="7" transform="translate(1392 800) rotate(-90)">21x10</text>
<text x="0" y="0" fill="#ffff00" font-size="7" transform="translate(1404 797) rotate(-90)">240</text>
<path d="M1287 867 H1385 M1295.5 861 V873 M1302 861 V873 M1368 861 V873 M1376.5 861 V873" stroke="#ff0000" stroke-width="1.2" fill="none" />
<path d="M1295.5 879 H1376.5 M1295.5 873 V885 M1376.5 873 V885" stroke="#ff0000" stroke-width="1.2" fill="none" />
<text x="1298" y="866" fill="#ffff00" font-size="7" text-anchor="middle" >15</text>
<text x="1334" y="866" fill="#ffff00" font-size="7" text-anchor="middle" >13x10</text>
<text x="1371" y="866" fill="#ffff00" font-size="7" text-anchor="middle" >20</text>
<text x="1336" y="877" fill="#ffff00" font-size="7" text-anchor="middle" >165</text>
</svg>
<div class="a" style="left:433px;top:982px;width:1188px;height:21px;background:#f0f0f0;"></div>
<svg class="a" style="left:433px;top:982px" width="110" height="22"><rect x="1" y="1" width="18" height="20" fill="#f0f0f0" stroke="#ddd"/><path d="M13 6 L7 11 L13 16 Z" fill="#666"/><rect x="19" y="1" width="19" height="20" fill="#f0f0f0" stroke="#ddd"/><path d="M26 6 L32 11 L26 16 Z" fill="#666"/><path d="M42 1 L50 21 M100 1 L92 21" stroke="#222" stroke-width="1"/></svg>
<div class="a t " style="left:488px;top:982.5px;font-size:14px;line-height:19px;color:#000;font-weight:normal;"><i>模</i><i>型</i></div>
<div class="a" style="left:1150px;top:984px;width:2px;height:17px;background:#aaa;"></div>
<div class="a" style="left:1173px;top:983px;width:20px;height:20px;background:#d6d6d6;"></div>
<svg class="a" style="left:1152px;top:984px" width="450" height="18"><path d="M12 5 L8 9 L12 13" fill="none" stroke="#333" stroke-width="1.5"/><path d="M435 5 L439 9 L435 13" fill="none" stroke="#333" stroke-width="1.5"/></svg>
<div class="a" style="left:433px;top:1003px;width:1188px;height:5px;background:#e3e3e3;"></div>
<div class="a" style="left:433px;top:1008px;width:1188px;height:2px;background:#6a6a6a;"></div>
<div class="a" style="left:433px;top:1010px;width:1188px;height:98px;background:#fff;border-left:2px solid #6a6a6a;box-sizing:border-box;"></div>
<div class="a t" style="left:445px;top:1009px;font-size:16px;line-height:24px;color:#111;font-family:'Liberation Mono', monospace"><i style="width:17px;font-family:'Liberation Sans',sans-serif">正</i><i style="width:17px;font-family:'Liberation Sans',sans-serif">在</i><i style="width:17px;font-family:'Liberation Sans',sans-serif">绘</i><i style="width:17px;font-family:'Liberation Sans',sans-serif">制</i><i style="width:17px;font-family:'Liberation Sans',sans-serif">《</i><i style="width:17px;font-family:'Liberation Sans',sans-serif">墩</i><i style="width:17px;font-family:'Liberation Sans',sans-serif">柱</i><i style="width:17px;font-family:'Liberation Sans',sans-serif">钢</i><i style="width:17px;font-family:'Liberation Sans',sans-serif">筋</i><i style="width:17px;font-family:'Liberation Sans',sans-serif">构</i><i style="width:17px;font-family:'Liberation Sans',sans-serif">造</i><i style="width:17px;font-family:'Liberation Sans',sans-serif">图</i><i style="width:8.5px">(</i><i style="width:17px;font-family:'Liberation Sans',sans-serif">一</i><i style="width:8.5px">)</i><i style="width:17px;font-family:'Liberation Sans',sans-serif">》</i><i style="width:8.5px">.</i><i style="width:8.5px">.</i><i style="width:8.5px">.</i></div>
<div class="a t" style="left:445px;top:1032px;font-size:16px;line-height:24px;color:#111;font-family:'Liberation Mono', monospace"><i style="width:17px;font-family:'Liberation Sans',sans-serif">《</i><i style="width:17px;font-family:'Liberation Sans',sans-serif">墩</i><i style="width:17px;font-family:'Liberation Sans',sans-serif">柱</i><i style="width:17px;font-family:'Liberation Sans',sans-serif">钢</i><i style="width:17px;font-family:'Liberation Sans',sans-serif">筋</i><i style="width:17px;font-family:'Liberation Sans',sans-serif">构</i><i style="width:17px;font-family:'Liberation Sans',sans-serif">造</i><i style="width:17px;font-family:'Liberation Sans',sans-serif">图</i><i style="width:8.5px">(</i><i style="width:17px;font-family:'Liberation Sans',sans-serif">一</i><i style="width:8.5px">)</i><i style="width:17px;font-family:'Liberation Sans',sans-serif">》</i><i style="width:17px;font-family:'Liberation Sans',sans-serif">绘</i><i style="width:17px;font-family:'Liberation Sans',sans-serif">制</i><i style="width:17px;font-family:'Liberation Sans',sans-serif">完</i><i style="width:17px;font-family:'Liberation Sans',sans-serif">成</i><i style="width:8.5px">!</i></div>
<div class="a t" style="left:445px;top:1055px;font-size:16px;line-height:24px;color:#111;font-family:'Liberation Mono', monospace"><i style="width:17px;font-family:'Liberation Sans',sans-serif">正</i><i style="width:17px;font-family:'Liberation Sans',sans-serif">在</i><i style="width:17px;font-family:'Liberation Sans',sans-serif">绘</i><i style="width:17px;font-family:'Liberation Sans',sans-serif">制</i><i style="width:17px;font-family:'Liberation Sans',sans-serif">《</i><i style="width:17px;font-family:'Liberation Sans',sans-serif">墩</i><i style="width:17px;font-family:'Liberation Sans',sans-serif">柱</i><i style="width:17px;font-family:'Liberation Sans',sans-serif">钢</i><i style="width:17px;font-family:'Liberation Sans',sans-serif">筋</i><i style="width:17px;font-family:'Liberation Sans',sans-serif">构</i><i style="width:17px;font-family:'Liberation Sans',sans-serif">造</i><i style="width:17px;font-family:'Liberation Sans',sans-serif">图</i><i style="width:8.5px">(</i><i style="width:17px;font-family:'Liberation Sans',sans-serif">二</i><i style="width:8.5px">)</i><i style="width:17px;font-family:'Liberation Sans',sans-serif">》</i><i style="width:8.5px">.</i><i style="width:8.5px">.</i><i style="width:8.5px">.</i></div>
<div class="a" style="left:1598px;top:1010px;width:22px;height:73px;background:#f0f0f0;"></div>
<div class="a" style="left:1599px;top:1040px;width:20px;height:20px;background:#cdcdcd;"></div>
<svg class="a" style="left:1598px;top:1010px" width="22" height="73"><path d="M7 15 L11 11 L15 15" fill="none" stroke="#333" stroke-width="1.5"/><path d="M7 57 L11 61 L15 57" fill="none" stroke="#333" stroke-width="1.5"/></svg>
<div class="a" style="left:435px;top:1082px;width:1186px;height:1px;background:#a0a0a0;"></div>
<div class="a" style="left:1508px;top:1083px;width:92px;height:23px;background:#f0f0f0;"></div>
<div class="a" style="left:1529px;top:1085px;width:21px;height:20px;background:#cdcdcd;"></div>
<svg class="a" style="left:1508px;top:1083px" width="92" height="23"><path d="M14 7 L10 11.5 L14 16" fill="none" stroke="#333" stroke-width="1.5"/><path d="M78 7 L82 11.5 L78 16" fill="none" stroke="#333" stroke-width="1.5"/></svg>
<div class="a" style="left:433px;top:1107px;width:1188px;height:3px;background:#f0f0f0;"></div>
<div class="a" style="left:433px;top:1110px;width:1188px;height:23px;background:#f0f0f0;"></div>
<div class="a t " style="left:434px;top:1110.5px;font-size:15px;line-height:21px;color:#111;font-weight:normal;letter-spacing:0.6px;">351.314307,  273.127428,  0.000000</div>
<div class="a" style="left:1337px;top:1111px;width:69px;height:21px;background:#e5f1fb;border:1px solid #3c8fd6;box-sizing:border-box;"></div>
<div class="a" style="left:1408px;top:1111px;width:69px;height:21px;background:#e5f1fb;border:1px solid #3c8fd6;box-sizing:border-box;"></div>
<div class="a t " style="left:1213px;top:1110.5px;font-size:15px;line-height:21px;color:#111;font-weight:normal;"><i>栅</i><i>格</i></div>
<div class="a t " style="left:1255px;top:1110.5px;font-size:15px;line-height:21px;color:#111;font-weight:normal;"><i>正</i><i>交</i></div>
<div class="a t " style="left:1297px;top:1110.5px;font-size:15px;line-height:21px;color:#111;font-weight:normal;"><i>极</i><i>轴</i></div>
<div class="a t " style="left:1339px;top:1110.5px;font-size:15px;line-height:21px;color:#111;font-weight:normal;"><i>对</i><i>象</i><i>捕</i><i>捉</i></div>
<div class="a t " style="left:1410px;top:1110.5px;font-size:15px;line-height:21px;color:#111;font-weight:normal;"><i>对</i><i>象</i><i>追</i><i>踪</i></div>
<div class="a t " style="left:1484px;top:1110.5px;font-size:15px;line-height:21px;color:#111;font-weight:normal;">DYN</div>
<div class="a t " style="left:1527px;top:1110.5px;font-size:15px;line-height:21px;color:#111;font-weight:normal;"><i>线</i><i>宽</i></div>
<div class="a t " style="left:1569px;top:1110.5px;font-size:15px;line-height:21px;color:#111;font-weight:normal;"><i>桥</i><i>绘</i><i>通</i></div>
<div class="a" style="left:1623px;top:195px;width:4px;height:939px;background:#f0f0f0;"></div>
<div class="a" style="left:1623px;top:197px;width:1px;height:936px;background:#fafafa;"></div>
<div class="a" style="left:1621px;top:197px;width:2px;height:936px;background:#5c5c5c;"></div>
<div class="a" style="left:431px;top:197px;width:2px;height:911px;background:#5c5c5c;"></div>
<div class="a" style="left:433px;top:1130px;width:1188px;height:1px;background:#a0a0a0;"></div>
<div class="a" style="left:0px;top:1134px;width:1628px;height:30px;background:#2b579a;"></div>
<div class="a t " style="left:12px;top:1140.5px;font-size:14px;line-height:19px;color:#fff;font-weight:normal;"><i>欢</i><i>迎</i><i>使</i><i>用</i><i>桥</i><i>绘</i><i>通</i>-<i>综</i><i>合</i><i>设</i><i>计</i><i>平</i><i>台</i></div>
<div class="a t" style="left:1194.0px;width:400px;text-align:right;top:1139.5px;font-size:15px;line-height:21px;color:#fff;font-weight:normal;"><i>网</i><i>址</i><i>：</i>www.qht.me QQ<i>群</i><i>：</i>235393538</div>
<svg class="a" style="left:1603px;top:1143px" width="18" height="18"><g fill="#c8d4e8"><rect x="12" y="3" width="2" height="2"/><rect x="8" y="7" width="2" height="2"/><rect x="12" y="7" width="2" height="2"/><rect x="4" y="11" width="2" height="2"/><rect x="8" y="11" width="2" height="2"/><rect x="12" y="11" width="2" height="2"/></g></svg>
<div class="a" style="left:0px;top:0px;width:1628px;height:1px;background:#1c5fcf;"></div>
<div class="a" style="left:0px;top:0px;width:1px;height:1134px;background:#1c5fcf;"></div>
<div class="a" style="left:1627px;top:0px;width:1px;height:1134px;background:#1c5fcf;"></div>
<script>(function(){var s=document.createElement('span');s.style.cssText='position:absolute;left:0;top:0;font-size:100px;font-family:"Liberation Sans",sans-serif;white-space:nowrap;visibility:hidden';s.textContent='首首首首';document.body.appendChild(s);var w=s.getBoundingClientRect().width;document.body.removeChild(s);if(w<360)document.documentElement.className+=' nocjk';})();</script>
</body></html>
